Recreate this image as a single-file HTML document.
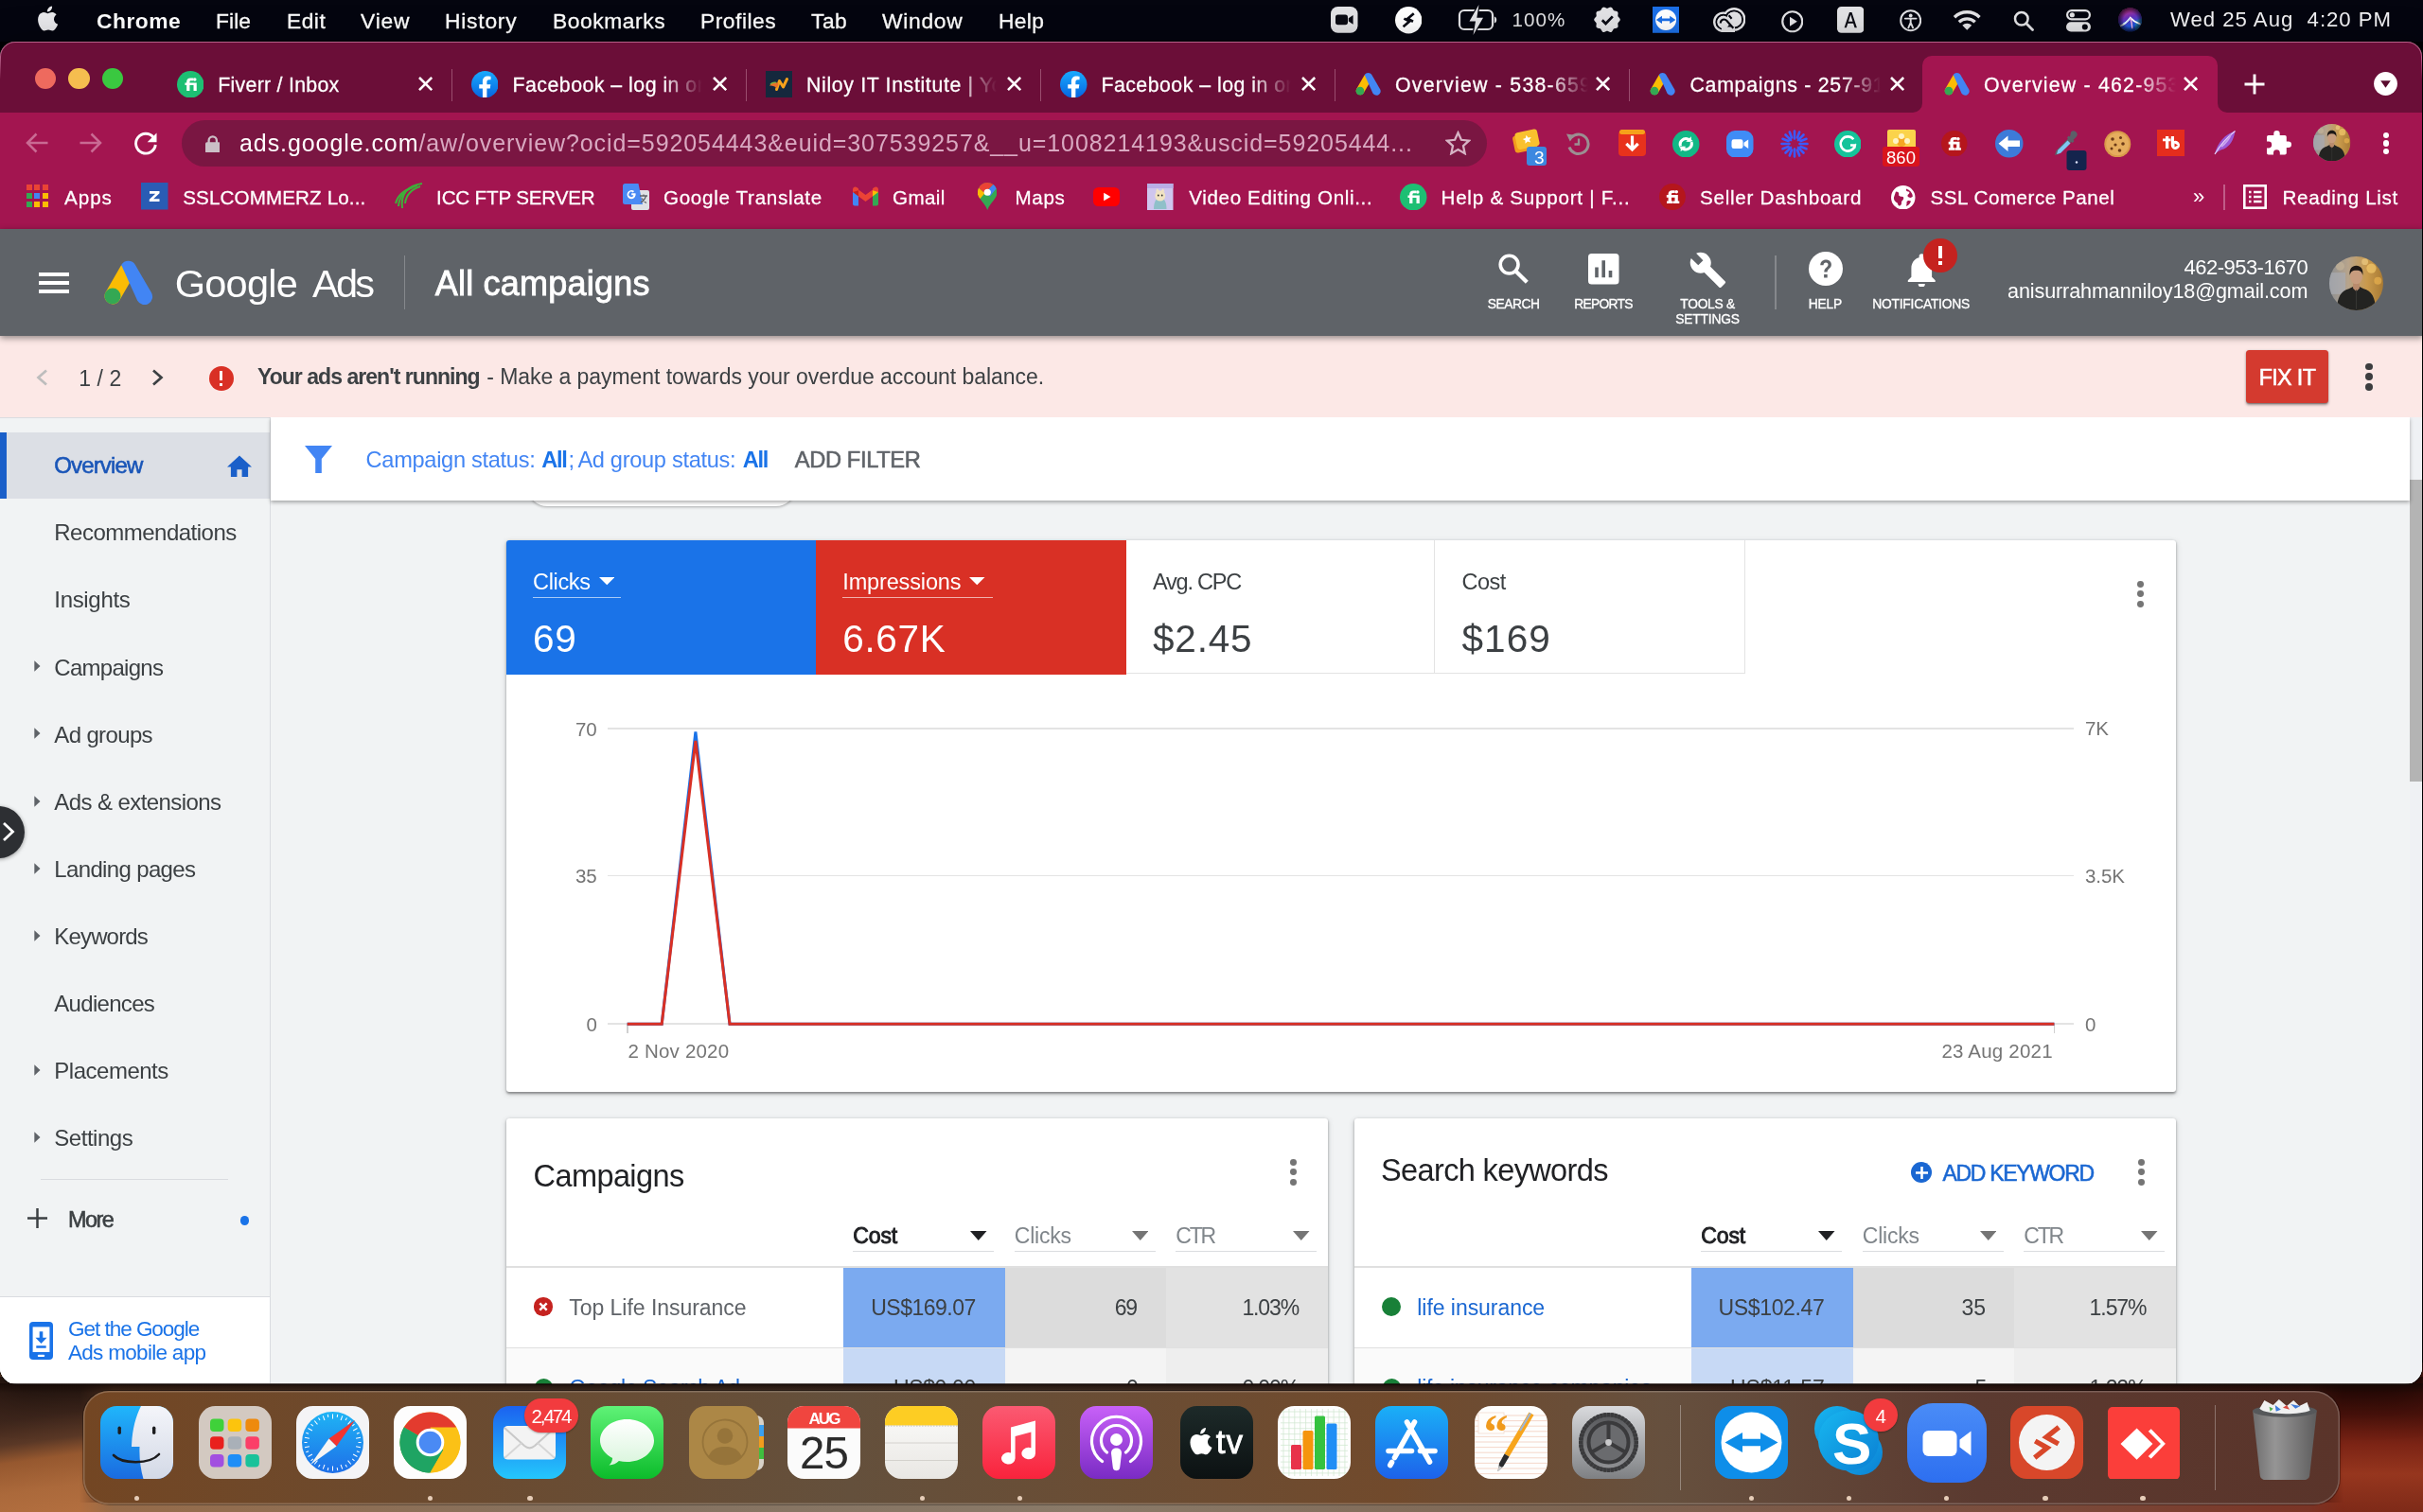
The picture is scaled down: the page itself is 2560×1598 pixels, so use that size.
<!DOCTYPE html>
<html lang="en"><head><meta charset="utf-8"><title>Overview - Google Ads</title>
<style>
html,body{margin:0;padding:0;}
body{width:2560px;height:1598px;overflow:hidden;position:relative;background:#000;font-family:"Liberation Sans", sans-serif;}
#root{position:absolute;left:0;top:0;width:2560px;height:1598px;overflow:hidden;will-change:transform;}
#root div,#root span.t,#root svg{position:absolute;}
span.t{white-space:nowrap;line-height:1;}

.sh1{box-shadow:0 1px 3px rgba(60,64,67,.3),0 2px 6px rgba(60,64,67,.15);}

</style></head><body><div id="root">
<div style="left:0;top:1440px;width:2560px;height:158px;background:linear-gradient(90deg,#5a3622 0%,#5a4030 20%,#5d4436 50%,#4a2a22 80%,#4a160f 100%);"></div>
<div style="left:0;top:1588px;width:2560px;height:10px;background:linear-gradient(90deg,#9a6a44,#857260 25%,#8a7a68 45%,#7d6552 65%,#7a4a3a 85%,#7a2a1c);"></div>
<div style="left:0;top:1455px;width:120px;height:143px;-webkit-mask-image:linear-gradient(90deg,#000 70%,transparent);background:linear-gradient(172deg,#2a1812 0%,#3e261c 30%,#5a3826 46%,#96582f 58%,#ab693b 78%,#b47040 100%);"></div>
<div style="left:2440px;top:1455px;width:120px;height:143px;-webkit-mask-image:linear-gradient(270deg,#000 70%,transparent);background:linear-gradient(180deg,#260906 0%,#4a120b 28%,#7c2415 50%,#96361e 72%,#7e2a18 100%);"></div>
<div style="left:0px;top:0px;width:2560px;height:46px;background:#04050f;"></div>
<svg style="left:39px;top:5px;" width="23.5" height="28.6" viewBox="0 0 23 28"><path fill="#e9e9ec" d="M17.6 14.9c0-3 2.5-4.5 2.6-4.6-1.4-2.1-3.6-2.4-4.4-2.4-1.9-.2-3.7 1.1-4.6 1.1-1 0-2.4-1.1-4-1.100C5.1 8 3.2 9.1 2.1 11c-2.2 3.9-.6 9.6 1.6 12.7 1.1 1.5 2.3 3.3 4 3.2 1.6-.1 2.2-1 4.1-1s2.5 1 4.2 1c1.7 0 2.8-1.6 3.9-3.1 1.2-1.8 1.7-3.5 1.7-3.6-.1 0-3.9-1.5-4-5.300zM14.4 5.600c.9-1.1 1.5-2.6 1.3-4.1-1.3.1-2.8.9-3.7 1.9-.8.9-1.5 2.5-1.3 3.9 1.4.1 2.8-.7 3.7-1.700z"/></svg>
<span class="t" style="left:102px;top:10.9px;font-size:22.8px;color:#fff;font-weight:700;letter-spacing:0.52px;">Chrome</span>
<span class="t" style="left:228px;top:10.9px;font-size:22.8px;color:#fff;letter-spacing:0.08px;-webkit-text-stroke:0.3px;">File</span>
<span class="t" style="left:303px;top:10.9px;font-size:22.8px;color:#fff;letter-spacing:0.49px;-webkit-text-stroke:0.3px;">Edit</span>
<span class="t" style="left:381px;top:10.9px;font-size:22.8px;color:#fff;letter-spacing:0.86px;-webkit-text-stroke:0.3px;">View</span>
<span class="t" style="left:470px;top:10.9px;font-size:22.8px;color:#fff;letter-spacing:0.78px;-webkit-text-stroke:0.3px;">History</span>
<span class="t" style="left:584px;top:10.9px;font-size:22.8px;color:#fff;letter-spacing:0.58px;-webkit-text-stroke:0.3px;">Bookmarks</span>
<span class="t" style="left:740px;top:10.9px;font-size:22.8px;color:#fff;letter-spacing:0.53px;-webkit-text-stroke:0.3px;">Profiles</span>
<span class="t" style="left:857px;top:10.9px;font-size:22.8px;color:#fff;letter-spacing:0.49px;-webkit-text-stroke:0.3px;">Tab</span>
<span class="t" style="left:932px;top:10.9px;font-size:22.8px;color:#fff;letter-spacing:0.71px;-webkit-text-stroke:0.3px;">Window</span>
<span class="t" style="left:1055px;top:10.9px;font-size:22.8px;color:#fff;letter-spacing:0.32px;-webkit-text-stroke:0.3px;">Help</span>
<svg style="left:1406px;top:7.4px;" width="28.5" height="27.8" viewBox="0 0 28.5 27.8"><rect width="28.5" height="27.8" rx="7.5" fill="#e2e2e5"/><rect x="5" y="8.6" width="13" height="10.6" rx="2.6" fill="#0a0b14"/><path d="M18.8 12.2 23.6 9v9.800l-4.8-3.200z" fill="#0a0b14"/></svg>
<svg style="left:1473.6px;top:7.2px;" width="28.4" height="28.4" viewBox="0 0 28.4 28.4"><circle cx="14.2" cy="14.2" r="14.2" fill="#fff"/><path d="M19.8 7.2 13.2 12.8 19 15.8M8.6 21.2 15.2 15.6 9.4 12.6" fill="none" stroke="#0a0b14" stroke-width="2.7" stroke-linejoin="miter"/></svg>
<svg style="left:1540px;top:5px;" width="42" height="32" viewBox="0 0 42 32"><rect x="2" y="6" width="35" height="20" rx="5" fill="none" stroke="#e2e2e5" stroke-width="2.2"/><path d="M38.8 12.500v7c1.6-.4 2.4-1.8 2.4-3.500s-.8-3.1-2.4-3.500z" fill="#e2e2e5"/><path d="M22.5 0 12.5 17.500h6.500L16.5 32 27 13.800h-6.700z" fill="#e2e2e5" stroke="#04050f" stroke-width="2.4" paint-order="stroke"/></svg>
<span class="t" style="left:1597.4px;top:10.5px;font-size:20.6px;color:#e2e2e5;letter-spacing:1.12px;">100%</span>
<svg style="left:1684px;top:7.4px;" width="28" height="27.6" viewBox="0 0 28 27.6"><path d="M27.80 13.80L27.72 14.34L27.49 14.86L27.15 15.36L26.74 15.82L26.31 16.25L25.92 16.66L25.62 17.08L25.41 17.51L25.32 17.98L25.33 18.49L25.40 19.06L25.49 19.66L25.56 20.27L25.54 20.87L25.42 21.43L25.16 21.91L24.78 22.30L24.29 22.59L23.73 22.79L23.12 22.92L22.52 23.02L21.96 23.13L21.47 23.28L21.05 23.51L20.70 23.83L20.41 24.26L20.13 24.75L19.86 25.29L19.54 25.83L19.18 26.31L18.75 26.68L18.26 26.92L17.73 27.02L17.16 26.96L16.58 26.79L16.02 26.54L15.48 26.27L14.96 26.03L14.47 25.86L14.00 25.80L13.53 25.86L13.04 26.03L12.52 26.27L11.98 26.54L11.42 26.79L10.84 26.96L10.27 27.02L9.74 26.92L9.25 26.68L8.82 26.31L8.46 25.83L8.14 25.29L7.87 24.75L7.59 24.26L7.30 23.83L6.95 23.51L6.53 23.28L6.04 23.13L5.48 23.02L4.88 22.92L4.27 22.79L3.71 22.59L3.22 22.30L2.84 21.91L2.58 21.43L2.46 20.87L2.44 20.27L2.51 19.66L2.60 19.06L2.67 18.49L2.68 17.98L2.59 17.51L2.38 17.08L2.08 16.66L1.69 16.25L1.26 15.82L0.85 15.36L0.51 14.86L0.28 14.34L0.20 13.80L0.28 13.26L0.51 12.74L0.85 12.24L1.26 11.78L1.69 11.35L2.08 10.94L2.38 10.52L2.59 10.09L2.68 9.62L2.67 9.11L2.60 8.54L2.51 7.94L2.44 7.33L2.46 6.73L2.58 6.17L2.84 5.69L3.22 5.30L3.71 5.01L4.27 4.81L4.88 4.68L5.48 4.58L6.04 4.47L6.53 4.32L6.95 4.09L7.30 3.77L7.59 3.34L7.87 2.85L8.14 2.31L8.46 1.77L8.82 1.29L9.25 0.92L9.74 0.68L10.27 0.58L10.84 0.64L11.42 0.81L11.98 1.06L12.52 1.33L13.04 1.57L13.53 1.74L14.00 1.80L14.47 1.74L14.96 1.57L15.48 1.33L16.02 1.06L16.58 0.81L17.16 0.64L17.73 0.58L18.26 0.68L18.75 0.92L19.18 1.29L19.54 1.77L19.86 2.31L20.13 2.85L20.41 3.34L20.70 3.77L21.05 4.09L21.47 4.32L21.96 4.47L22.52 4.58L23.12 4.68L23.73 4.81L24.29 5.01L24.78 5.30L25.16 5.69L25.42 6.17L25.54 6.73L25.56 7.33L25.49 7.94L25.40 8.54L25.33 9.11L25.32 9.62L25.41 10.09L25.62 10.52L25.92 10.94L26.31 11.35L26.74 11.78L27.15 12.24L27.49 12.74L27.72 13.26L27.80 13.80Z" fill="#e2e2e5"/><path d="M8.8 14.200 12.500 17.900 19.800 10.400" fill="none" stroke="#0a0b14" stroke-width="2.800"/></svg>
<svg style="left:1746px;top:7.4px;" width="28.2" height="27.8" viewBox="0 0 28.2 27.8"><rect width="28.2" height="27.8" fill="#1c6fe6"/><circle cx="14.1" cy="13.9" r="11" fill="#fff"/><path d="M3.8 13.9 10 9.800v2.700h8.200V9.800l6.2 4.1-6.2 4.100v-2.700H10v2.700z" fill="#1c6fe6"/></svg>
<svg style="left:1809.8px;top:7.9px;" width="34.5" height="26.2" viewBox="0 0 34.5 26.2"><circle cx="10.900" cy="15.300" r="10.900" fill="#e2e2e5"/><circle cx="22.100" cy="12.400" r="12.400" fill="#e2e2e5"/><rect x="10" y="18" width="13" height="8.200" fill="#e2e2e5"/><g fill="none" stroke="#04050f" stroke-width="2"><circle cx="10.900" cy="15.300" r="7.500"/><circle cx="22.100" cy="12.400" r="9"/></g><circle cx="10.900" cy="15.300" r="6.500" fill="#e2e2e5"/><circle cx="22.100" cy="12.400" r="8" fill="#e2e2e5"/><rect x="9" y="20.500" width="14" height="3.600" fill="#e2e2e5"/><path d="M7.800 16.500C7.800 12.500 12 11.500 14.300 13.800L21.300 21.800M16.600 8.300 19.600 11.700" fill="none" stroke="#04050f" stroke-width="2.100"/></svg>
<svg style="left:1881.5px;top:11px;" width="23.5" height="23.5" viewBox="0 0 23.5 23.5"><circle cx="11.75" cy="11.75" r="10.5" fill="none" stroke="#e2e2e5" stroke-width="2.2"/><path d="M9 6.800v9.900l7.8-4.950z" fill="#e2e2e5"/></svg>
<svg style="left:1941px;top:7.4px;" width="28.4" height="27.8" viewBox="0 0 28.4 27.8"><rect width="28.4" height="27.8" rx="4.5" fill="#e2e2e5"/><path d="M7.6 22.3 13 6h2.500l5.4 16.300h-2.400l-1.4-4.500h-5.800l-1.4 4.500zM12 15.800h4.500l-2.250-7.200z" fill="#0a0b14"/></svg>
<svg style="left:2006.5px;top:10.3px;" width="23.4" height="23.4" viewBox="0 0 23.4 23.4"><circle cx="11.7" cy="11.7" r="10.5" fill="none" stroke="#e2e2e5" stroke-width="2"/><circle cx="11.7" cy="6.5" r="1.9" fill="#e2e2e5"/><path d="M5.8 9.600h11.800M11.7 9.600v5M11.7 14 9.3 19.500M11.7 14l2.4 5.5" stroke="#e2e2e5" stroke-width="1.9" fill="none" stroke-linecap="round"/></svg>
<svg style="left:2063px;top:9.5px;" width="30.5" height="22" viewBox="0 0 30.5 22"><g fill="none" stroke="#e2e2e5" stroke-width="3.4"><path d="M2 8.200a19 19 0 0 1 26.5 0"/><path d="M6.8 13.200a12.3 12.3 0 0 1 16.9 0"/></g><path d="M15.250 21.8 10.3 16.800a7 7 0 0 1 9.9 0z" fill="#e2e2e5"/></svg>
<svg style="left:2127px;top:11px;" width="22" height="22" viewBox="0 0 22 22"><circle cx="8.8" cy="8.8" r="6.8" fill="none" stroke="#e2e2e5" stroke-width="2.5"/><path d="M13.8 13.8 20.5 20.5" stroke="#e2e2e5" stroke-width="2.8" stroke-linecap="round"/></svg>
<svg style="left:2182.5px;top:10.3px;" width="26" height="23.5" viewBox="0 0 26 23.5"><rect x="1.1" y="1.1" width="23.8" height="9.3" rx="4.650" fill="none" stroke="#e2e2e5" stroke-width="2.2"/><circle cx="6.3" cy="5.750" r="2.6" fill="#e2e2e5"/><rect x="0" y="13.3" width="26" height="10.2" rx="5.1" fill="#e2e2e5"/><circle cx="19.8" cy="18.4" r="3" fill="#04050f"/></svg>
<svg style="left:2237.5px;top:8.4px;" width="25.2" height="25.7" viewBox="0 0 25.2 25.7"><defs><clipPath id="sic"><circle cx="12.600" cy="12.850" r="12.500"/></clipPath><linearGradient id="sig" x1=".3" y1="0" x2=".6" y2="1"><stop offset="0" stop-color="#d2347e"/><stop offset=".4" stop-color="#6a2fb8"/><stop offset=".75" stop-color="#1f55d8"/><stop offset="1" stop-color="#173a9a"/></linearGradient><radialGradient id="sir" cx=".5" cy=".5" r=".5"><stop offset=".55" stop-color="#000" stop-opacity="0"/><stop offset="1" stop-color="#05061a" stop-opacity=".75"/></radialGradient></defs><g clip-path="url(#sic)"><rect width="26" height="26" fill="url(#sig)"/><path d="M18 14l8-3v14h-8z" fill="#1e8f9a" opacity=".55"/><path d="M2.500 19.500C7 17.500 10 14.500 12.800 10.800 15.500 13.800 18.500 15.800 23 17.300" stroke="#fff" stroke-width="1.900" fill="none" stroke-linecap="round"/><path d="M12.800 10.800c1.200 3.500 1.800 7 2 11.500" stroke="#f7b6e0" stroke-width="1.300" fill="none"/><path d="M5 17c3-1 5.500-3 7.800-6.200" stroke="#bfe9ff" stroke-width="1" fill="none"/><rect width="26" height="26" fill="url(#sir)"/></g></svg>
<span class="t" style="left:2293px;top:9.7px;font-size:22.2px;color:#f2f2f4;letter-spacing:0.98px;">Wed 25 Aug&nbsp; 4:20 PM</span>
<div style="left:0px;top:44px;width:2560px;height:26px;background:#010104;"></div>
<div id="win" style="left:0;top:44px;width:2558.5px;height:1418.5px;border-radius:16px 16px 18px 18px;background:#f1f3f4;overflow:hidden;box-shadow:0 0 0 1px rgba(0,0,0,.55),0 10px 40px rgba(0,0,0,.5);">
<div style="left:0;top:-44px;width:2560px;height:1598px;">
<div style="left:0px;top:44px;width:2560px;height:75px;background:#6b0e38;"></div>
<div style="left:0px;top:118.5px;width:2560px;height:123.0px;background:#a31550;"></div>
<div style="left:2031px;top:58.5px;width:312px;height:61px;background:#a31550;border-radius:10px 10px 0 0;"></div>
<svg style="left:2021px;top:109px;" width="10" height="10" viewBox="0 0 10 10"><path d="M10 0V10H0A10 10 0 0 0 10 0Z" fill="#a31550"/></svg>
<svg style="left:2343px;top:109px;" width="10" height="10" viewBox="0 0 10 10"><path d="M0 0V10H10A10 10 0 0 1 0 0Z" fill="#a31550"/></svg>
<div style="left:36.6px;top:71.8px;width:22.4px;height:22.4px;border-radius:50%;background:#ee6a5e;"></div>
<div style="left:72.3px;top:71.8px;width:22.4px;height:22.4px;border-radius:50%;background:#f5bd4f;"></div>
<div style="left:107.8px;top:71.8px;width:22.4px;height:22.4px;border-radius:50%;background:#3ac840;"></div>
<svg style="left:186.5px;top:74.5px;" width="28.5" height="28.5" viewBox="0 0 28 28"><circle cx="14" cy="14" r="14" fill="#1dbf73"/><path d="M8.3 12.200h1.700v-1.100c0-2.3 1.5-3.7 3.9-3.700h3.200v2.700h-2.500c-.9 0-1.4.4-1.4 1.200v.9h7.200v8.500h-3.200v-5.900h-4v5.900H10v-5.900H8.300z" fill="#fff"/><circle cx="18.5" cy="8.8" r="1.7" fill="#fff"/></svg>
<span class="t" style="left:230.3px;top:79.65px;font-size:21.3px;color:#fff;letter-spacing:0.28px;-webkit-text-stroke:0.28px;">Fiverr / Inbox</span>
<svg style="left:442.1px;top:81.4px;" width="15.2" height="15.2" viewBox="0 0 15.2 15.2"><path d="M1 1 14.2 14.2M14.2 1 1 14.2" stroke="#fff" stroke-width="2.6" fill="none"/></svg>
<div style="left:476.7px;top:73px;width:1.6px;height:34px;background:#9a4d6e;"></div>
<svg style="left:497.8px;top:74.5px;" width="28.5" height="28.5" viewBox="0 0 28 28"><defs><linearGradient id="fbg" x1="0" y1="0" x2="0" y2="1"><stop offset="0" stop-color="#19aafe"/><stop offset="1" stop-color="#0664e0"/></linearGradient></defs><circle cx="14" cy="14" r="14" fill="url(#fbg)"/><path d="M19.4 18.1 20 14h-3.900v-2.600c0-1.1.5-2.2 2.3-2.200h1.800V5.700s-1.6-.3-3.2-.3c-3.2 0-5.3 2-5.3 5.500V14H8.100v4.100h3.600V28h4.400v-9.900z" fill="#fff"/></svg>
<span class="t" style="left:541.5px;top:79.65px;font-size:21.3px;color:#fff;letter-spacing:0.49px;-webkit-text-stroke:0.28px;">Facebook – log in or</span>
<div style="left:700px;top:72px;width:51px;height:36px;background:linear-gradient(90deg,#6b0e3800,#6b0e38 82%);"></div>
<svg style="left:753.1px;top:81.4px;" width="15.2" height="15.2" viewBox="0 0 15.2 15.2"><path d="M1 1 14.2 14.2M14.2 1 1 14.2" stroke="#fff" stroke-width="2.6" fill="none"/></svg>
<div style="left:787.7px;top:73px;width:1.6px;height:34px;background:#9a4d6e;"></div>
<svg style="left:809px;top:75px;" width="28" height="28" viewBox="0 0 28 28"><rect width="28" height="28" fill="#15283d"/><path d="M11.5 19.5 14.5 10.5 18.5 17 22.5 8.500" stroke="#f7a21b" stroke-width="3" fill="none" stroke-linejoin="round" stroke-linecap="round"/><path d="M4 15.5c2.5-3.5 6-4.5 9.5-2l-1.500 4.500c-2.500-2-5-2.800-8-2.500z" fill="#e8722a"/><path d="M5 14c2-1.800 4-2.300 6-1.600" stroke="#7cb342" stroke-width="1.400" fill="none"/></svg>
<span class="t" style="left:852px;top:79.65px;font-size:21.3px;color:#fff;letter-spacing:0.65px;-webkit-text-stroke:0.28px;">Niloy IT Institute | Yo</span>
<div style="left:1012px;top:72px;width:50px;height:36px;background:linear-gradient(90deg,#6b0e3800,#6b0e38 82%);"></div>
<svg style="left:1063.6px;top:81.4px;" width="15.2" height="15.2" viewBox="0 0 15.2 15.2"><path d="M1 1 14.2 14.2M14.2 1 1 14.2" stroke="#fff" stroke-width="2.6" fill="none"/></svg>
<div style="left:1098.7px;top:73px;width:1.6px;height:34px;background:#9a4d6e;"></div>
<svg style="left:1120px;top:74.5px;" width="28.5" height="28.5" viewBox="0 0 28 28"><defs><linearGradient id="fbg" x1="0" y1="0" x2="0" y2="1"><stop offset="0" stop-color="#19aafe"/><stop offset="1" stop-color="#0664e0"/></linearGradient></defs><circle cx="14" cy="14" r="14" fill="url(#fbg)"/><path d="M19.4 18.1 20 14h-3.900v-2.600c0-1.1.5-2.2 2.3-2.200h1.800V5.700s-1.6-.3-3.2-.3c-3.2 0-5.3 2-5.3 5.500V14H8.100v4.100h3.600V28h4.400v-9.900z" fill="#fff"/></svg>
<span class="t" style="left:1163.4px;top:79.65px;font-size:21.3px;color:#fff;letter-spacing:0.49px;-webkit-text-stroke:0.28px;">Facebook – log in or</span>
<div style="left:1322px;top:72px;width:51px;height:36px;background:linear-gradient(90deg,#6b0e3800,#6b0e38 82%);"></div>
<svg style="left:1375.4px;top:81.4px;" width="15.2" height="15.2" viewBox="0 0 15.2 15.2"><path d="M1 1 14.2 14.2M14.2 1 1 14.2" stroke="#fff" stroke-width="2.6" fill="none"/></svg>
<div style="left:1409.7px;top:73px;width:1.6px;height:34px;background:#9a4d6e;"></div>
<svg style="left:1432px;top:76px;" width="27" height="25" viewBox="0 0 26.5 24.5"><path d="M9.5 3.2 1.2 17.600a4.3 4.3 0 0 0 7.4 4.300L16.9 7.500z" fill="#fbbc04"/><path d="M9.6 3.100a4.3 4.3 0 0 1 7.4-.1l8.6 14.800a4.3 4.3 0 0 1-7.5 4.300z" fill="#4285f4"/><circle cx="4.9" cy="19.8" r="4.3" fill="#34a853"/></svg>
<span class="t" style="left:1474px;top:79.65px;font-size:21.3px;color:#fff;letter-spacing:1.24px;-webkit-text-stroke:0.28px;">Overview - 538-659</span>
<div style="left:1636px;top:72px;width:51px;height:36px;background:linear-gradient(90deg,#6b0e3800,#6b0e38 82%);"></div>
<svg style="left:1686.4px;top:81.4px;" width="15.2" height="15.2" viewBox="0 0 15.2 15.2"><path d="M1 1 14.2 14.2M14.2 1 1 14.2" stroke="#fff" stroke-width="2.6" fill="none"/></svg>
<div style="left:1720.8px;top:73px;width:1.6px;height:34px;background:#9a4d6e;"></div>
<svg style="left:1743px;top:76px;" width="27" height="25" viewBox="0 0 26.5 24.5"><path d="M9.5 3.2 1.2 17.600a4.3 4.3 0 0 0 7.4 4.300L16.9 7.500z" fill="#fbbc04"/><path d="M9.6 3.100a4.3 4.3 0 0 1 7.4-.1l8.6 14.800a4.3 4.3 0 0 1-7.5 4.300z" fill="#4285f4"/><circle cx="4.9" cy="19.8" r="4.3" fill="#34a853"/></svg>
<span class="t" style="left:1785.5px;top:79.65px;font-size:21.3px;color:#fff;letter-spacing:0.72px;-webkit-text-stroke:0.28px;">Campaigns - 257-91</span>
<div style="left:1946px;top:72px;width:50px;height:36px;background:linear-gradient(90deg,#6b0e3800,#6b0e38 82%);"></div>
<svg style="left:1997.4px;top:81.4px;" width="15.2" height="15.2" viewBox="0 0 15.2 15.2"><path d="M1 1 14.2 14.2M14.2 1 1 14.2" stroke="#fff" stroke-width="2.6" fill="none"/></svg>
<svg style="left:2054px;top:76px;" width="27" height="25" viewBox="0 0 26.5 24.5"><path d="M9.5 3.2 1.2 17.600a4.3 4.3 0 0 0 7.4 4.300L16.9 7.500z" fill="#fbbc04"/><path d="M9.6 3.100a4.3 4.3 0 0 1 7.4-.1l8.6 14.800a4.3 4.3 0 0 1-7.5 4.300z" fill="#4285f4"/><circle cx="4.9" cy="19.8" r="4.3" fill="#34a853"/></svg>
<span class="t" style="left:2096px;top:79.65px;font-size:21.3px;color:#fff;letter-spacing:1.21px;-webkit-text-stroke:0.28px;">Overview - 462-953</span>
<div style="left:2258px;top:72px;width:50px;height:36px;background:linear-gradient(90deg,#a3155000,#a31550 82%);"></div>
<svg style="left:2307.1px;top:81.4px;" width="15.2" height="15.2" viewBox="0 0 15.2 15.2"><path d="M1 1 14.2 14.2M14.2 1 1 14.2" stroke="#fff" stroke-width="2.6" fill="none"/></svg>
<svg style="left:2371px;top:78px;" width="22" height="22" viewBox="0 0 22 22"><path d="M11 .5v21M.5 11h21" stroke="#fff" stroke-width="2.9" fill="none"/></svg>
<svg style="left:2508px;top:76.2px;" width="25" height="25" viewBox="0 0 25 25"><circle cx="12.5" cy="12.5" r="12.4" fill="#fff"/><path d="M7.2 9.300h10.600l-5.3 7.400z" fill="#5a0c2f"/></svg>
<svg style="left:27px;top:140px;" width="24" height="22" viewBox="0 0 24 22"><path d="M23.5 11H2.500M11.5 1.5 2 11l9.5 9.5" stroke="#c96a93" stroke-width="2.5" fill="none"/></svg>
<svg style="left:84px;top:140px;" width="24" height="22" viewBox="0 0 24 22"><path d="M.5 11h21M12.5 1.5 22 11l-9.5 9.5" stroke="#c96a93" stroke-width="2.5" fill="none"/></svg>
<svg style="left:141px;top:138.5px;" width="26" height="26" viewBox="0 0 26 26"><path d="M21.2 6.300A10.4 10.4 0 1 0 23.3 14" stroke="#fff" stroke-width="2.9" fill="none"/><path d="M24.5 1.500v9.800h-9.800z" fill="#fff"/></svg>
<div style="left:192px;top:127px;width:1379px;height:48.5px;border-radius:24.5px;background:#7a1642;"></div>
<svg style="left:216.5px;top:142.5px;" width="15.5" height="18.5" viewBox="0 0 15.5 18.5"><rect x="0" y="7.3" width="15.5" height="11.2" rx="1.6" fill="#cbbfc6"/><path d="M3.6 8V5.500a4.150 4.150 0 0 1 8.3 0V8" stroke="#cbbfc6" stroke-width="2.3" fill="none"/></svg>
<span class="t" style="left:253px;top:138.8px;font-size:25px;color:#fff;letter-spacing:0.92px;">ads.google.com<span style="color:#d9a9c1">/aw/overview?ocid=592054443&amp;euid=307539257&amp;__u=1008214193&amp;uscid=59205444...</span></span>
<svg style="left:1526.5px;top:138px;" width="27" height="26" viewBox="0 0 27 26"><path d="M13.5 2.3 16.9 9.8 25 10.7 19 16.2 20.7 24.2 13.5 20.1 6.3 24.2 8 16.2 2 10.7 10.1 9.800z" stroke="#d6b3c4" stroke-width="2.3" fill="none" stroke-linejoin="miter"/></svg>
<svg style="left:1596px;top:136px;" width="40" height="46" viewBox="0 0 40 46"><g transform="rotate(-12 14 14)"><rect x="3" y="6" width="24" height="18" rx="3" fill="#f29d1d"/><rect x="6" y="3" width="24" height="18" rx="3" fill="#f9c12e"/><path d="M18 7.500l1.4 3 3.2.3-2.4 2.1.7 3.1-2.9-1.7-2.9 1.7.7-3.1-2.4-2.1 3.2-.3z" fill="#fff"/></g><rect x="17" y="19" width="21" height="20" rx="3" fill="#3c88e0"/></svg>
<span class="t" style="left:1621px;top:157.3px;font-size:19px;color:#fff;">3</span>
<svg style="left:1654px;top:138px;" width="27" height="27" viewBox="0 0 27 27"><path d="M6.2 7.200A10.3 10.3 0 1 1 4 17.5" stroke="#9b8f92" stroke-width="3" fill="none"/><path d="M1 3.5 9.8 4.8 4.8 11.500z" fill="#9b8f92"/><path d="M14 8.500v6h-4.5" stroke="#9b8f92" stroke-width="2.3" fill="none"/></svg>
<svg style="left:1710px;top:137px;" width="29" height="29" viewBox="0 0 29 29"><rect y="1" width="29" height="27" rx="4" fill="#e8321c"/><rect x="1" y="0" width="27" height="5" rx="2.5" fill="#f6a11a"/><path d="M14.5 6.500v14M8.3 14.800l6.2 6.2 6.2-6.2" stroke="#fff" stroke-width="3.2" fill="none"/></svg>
<svg style="left:1767px;top:137.5px;" width="28.5" height="28.5" viewBox="0 0 28.5 28.5"><circle cx="14.250" cy="14.250" r="14.250" fill="#12b886"/><path d="M8.5 16.500a6 6 0 0 1 9.5-6.500l-2 .3M20 12a6 6 0 0 1-9.5 6.500l2-.3" stroke="#fff" stroke-width="3" fill="none"/><path d="M19.8 6.200v5.600h-5.600zM8.7 22.300v-5.600h5.600z" fill="#fff"/></svg>
<svg style="left:1824px;top:137.5px;" width="28.5" height="28.5" viewBox="0 0 28.5 28.5"><rect width="28.5" height="28.5" rx="9" fill="#3f8cf6"/><rect x="5.5" y="9.3" width="12" height="9.8" rx="2.4" fill="#fff"/><path d="M18.5 12.7 23.2 9.500v9.500l-4.7-3.200z" fill="#fff"/></svg>
<svg style="left:1880.5px;top:137px;" width="30" height="30" viewBox="0 0 30 30"><g stroke="#3b5bfd" stroke-width="2.6" stroke-linecap="round"><path d="M15 1.500v8M15 20.500v8M1.5 15h8M20.5 15h8M5.5 5.500l5.6 5.600M18.9 18.900l5.6 5.600M24.5 5.500l-5.6 5.600M11.1 18.900l-5.6 5.600M9.8 2.500l2.2 6M18 21.500l2.2 6M20.2 2.5 18 8.500M12 21.500l-2.2 6M2.5 9.800l6 2.200M21.5 18l6 2.200M2.5 20.200l6-2.200M21.5 12l6-2.2"/></g></svg>
<svg style="left:1937.5px;top:137.5px;" width="28.5" height="28.5" viewBox="0 0 28.5 28.5"><circle cx="14.250" cy="14.250" r="14.250" fill="#15c39a"/><path d="M20.3 9.200a7.6 7.6 0 1 0 1.5 6.300H17" stroke="#fff" stroke-width="2.6" fill="none"/><path d="M22.5 13.200v5.600h-3z" fill="#fff"/></svg>
<svg style="left:1994px;top:137px;" width="30" height="20" viewBox="0 0 30 20"><rect width="30" height="20" rx="2" fill="#fbd34b"/><circle cx="15" cy="13" r="5" fill="#f5a623"/><circle cx="9" cy="12" r="3" fill="#fff3c4"/><circle cx="21" cy="12" r="3" fill="#fff3c4"/><circle cx="15" cy="7" r="3" fill="#fff3c4"/></svg>
<div style="left:1989px;top:155px;width:39px;height:20.5px;background:#d9141c;border-radius:3px;"></div>
<span class="t" style="left:1993px;top:157.55px;font-size:18.5px;color:#fff;letter-spacing:0.05px;">860</span>
<svg style="left:2051px;top:137.8px;" width="27.5" height="27.5" viewBox="0 0 28 28"><circle cx="14" cy="14" r="14" fill="#b5161c"/><path d="M7.8 12h1.800v-1c0-2.4 1.6-3.8 4-3.800h3v2.800h-2.200c-.9 0-1.4.4-1.4 1.200v.8h6.800v6.500h1.500v2.500h-6.500V18.500h1.700V14.700H13v3.800h1.500V21H8v-2.500h1.600v-3.800H7.800z" fill="#fff"/><circle cx="18.2" cy="8.8" r="1.8" fill="#fff"/></svg>
<svg style="left:2108px;top:137px;" width="29.5" height="29.5" viewBox="0 0 29.5 29.5"><circle cx="14.750" cy="14.750" r="14.750" fill="#3d7bd9"/><path d="M3.5 14.750 13.5 6.500v5H26v6.500H13.500v5z" fill="#fff"/></svg>
<svg style="left:2166px;top:136px;" width="40" height="46" viewBox="0 0 40 46"><path d="M22 3.500a3.8 3.8 0 0 1 5.4 5.400l-3 3 1.2 1.2-2 2-1.2-1.200L9.5 26.8 5 28l1.2-4.500L19 10.600l-1.2-1.2 2-2 1.2 1.200z" fill="#5b6068"/><path d="M18.5 12.5 8.2 22.8 7 27l4.2-1.2 10.3-10.300z" fill="#7ec8f2"/><rect x="17.5" y="23" width="21" height="21" rx="3" fill="#14244d"/><circle cx="28" cy="35.5" r="1.2" fill="#dfe6ff"/></svg>
<svg style="left:2223px;top:137.5px;" width="28.5" height="28.5" viewBox="0 0 28.5 28.5"><circle cx="14.250" cy="14.250" r="14" fill="#d99a4a"/><circle cx="14.250" cy="14.250" r="12" fill="#e6ad5e"/><g fill="#6b3a17"><circle cx="9" cy="9" r="1.8"/><circle cx="17.5" cy="7.5" r="1.5"/><circle cx="20" cy="14" r="1.8"/><circle cx="12" cy="15" r="1.6"/><circle cx="8" cy="19" r="1.5"/><circle cx="16.5" cy="21" r="1.8"/></g></svg>
<svg style="left:2279px;top:137px;" width="29" height="28" viewBox="0 0 29 28"><rect width="29" height="28" fill="#e52d1d"/><path d="M6 9.500h3V7h3.300v2.500h2.200v2.800h-2.200V20H9v-7.700H6z" fill="#fff"/><path d="M14.8 7h3.200v5a4.6 4.6 0 1 1-3.2 4.400z" fill="#fff"/><path d="M18.5 14.6 22 16.5 18.5 18.400z" fill="#e52d1d"/></svg>
<svg style="left:2338px;top:137px;" width="26" height="28" viewBox="0 0 26 28"><path d="M23.5 1.500C13 5 5 13 2 26c3-3 6-4.5 9.5-5.500C18 17.5 22 11 23.5 1.500z" fill="#9b59d6"/><path d="M23.5 1.500C15 8 8 16 2 26" stroke="#e6d2f7" stroke-width="1.2" fill="none"/><path d="M19 5c-1.5 4-5 9-10 13" stroke="#c9a4ef" stroke-width="2" fill="none"/></svg>
<svg style="left:2394.5px;top:138px;" width="26" height="25.5" viewBox="0 0 26 25.5"><path d="M10.5 0a3.2 3.2 0 0 1 3.2 3.200V5H19a1.8 1.8 0 0 1 1.8 1.800v4.700h1.900a3.3 3.3 0 0 1 0 6.600h-1.900v5.600A1.8 1.8 0 0 1 19 25.500h-5.200v-1.900a3.4 3.4 0 0 0-6.8 0v1.900H1.800A1.8 1.8 0 0 1 0 23.700v-5.300h1.800a3.4 3.4 0 0 0 0-6.800H0V6.800A1.8 1.8 0 0 1 1.8 5h5.500V3.200A3.2 3.2 0 0 1 10.5 0z" fill="#fff"/></svg>
<svg style="left:2444.3px;top:131.1px;" width="39.4" height="39.4" viewBox="0 0 100 100"><defs><clipPath id="avc1"><circle cx="50" cy="50" r="50"/></clipPath><linearGradient id="avg1" x1="0" y1="0" x2="1" y2="0"><stop offset="0" stop-color="#8d8f92"/><stop offset=".35" stop-color="#b7a48c"/><stop offset=".7" stop-color="#c99a4c"/><stop offset="1" stop-color="#a87a34"/></linearGradient></defs><g clip-path="url(#avc1)"><rect width="100" height="100" fill="url(#avg1)"/><rect x="0" y="30" width="30" height="40" fill="#a9adb3" opacity=".7"/><circle cx="78" cy="22" r="9" fill="#f0c56a" opacity=".75"/><circle cx="90" cy="45" r="7" fill="#e8b04e" opacity=".7"/><circle cx="66" cy="10" r="6" fill="#f3d38a" opacity=".6"/><circle cx="20" cy="18" r="8" fill="#c9b79a" opacity=".6"/><path d="M14 100c0-24 8-36 22-40l8-4h12l8 4c14 4 22 16 22 40z" fill="#232321"/><path d="M44 50h12v9l-6 6-6-6z" fill="#b88a6c"/><ellipse cx="50" cy="37" rx="11.500" ry="14.500" fill="#c79c7e"/><path d="M38 35c-1.500-12 4-18 12-18s13.500 6 12 18c-1.500-6-4-9-12-9s-10.500 3-12 9z" fill="#1d1816"/><path d="M50 62v36" stroke="#3a3a36" stroke-width="1.500"/></g></svg>
<div style="left:2517.7px;top:139.5px;width:6.2px;height:6.2px;border-radius:50%;background:#fff;"></div>
<div style="left:2517.7px;top:148.4px;width:6.2px;height:6.2px;border-radius:50%;background:#fff;"></div>
<div style="left:2517.7px;top:157.3px;width:6.2px;height:6.2px;border-radius:50%;background:#fff;"></div>
<div style="left:27.5px;top:195.2px;width:6.0px;height:6.0px;background:#ea4335;"></div>
<div style="left:36.3px;top:195.2px;width:6.0px;height:6.0px;background:#ea4335;"></div>
<div style="left:45.1px;top:195.2px;width:6.0px;height:6.0px;background:#ea4335;"></div>
<div style="left:27.5px;top:204.0px;width:6.0px;height:6.0px;background:#34a853;"></div>
<div style="left:36.3px;top:204.0px;width:6.0px;height:6.0px;background:#4285f4;"></div>
<div style="left:45.1px;top:204.0px;width:6.0px;height:6.0px;background:#fbbc04;"></div>
<div style="left:27.5px;top:212.79999999999998px;width:6.0px;height:6.0px;background:#34a853;"></div>
<div style="left:36.3px;top:212.79999999999998px;width:6.0px;height:6.0px;background:#fbbc04;"></div>
<div style="left:45.1px;top:212.79999999999998px;width:6.0px;height:6.0px;background:#fbbc04;"></div>
<span class="t" style="left:68.1px;top:198.5px;font-size:20.6px;color:#fff;letter-spacing:0.96px;-webkit-text-stroke:0.27px;">Apps</span>
<svg style="left:149.3px;top:193.3px;" width="28.5" height="28.5" viewBox="0 0 28.5 28.5"><rect width="28.5" height="28.5" fill="#2a5cb4"/><path d="M9 9h10.500v2.200l-6.4 6.100h6.400V20H8.800v-2.200l6.4-6.100H9z" fill="#fff"/></svg>
<span class="t" style="left:193.2px;top:198.5px;font-size:20.6px;color:#fff;letter-spacing:0.13px;-webkit-text-stroke:0.27px;">SSLCOMMERZ Lo...</span>
<svg style="left:417px;top:193px;" width="30" height="29" viewBox="0 0 30 29"><g fill="none" stroke="#3fae3a" stroke-width="2"><path d="M29 1C15 3 6 10 8 27"/><path d="M24 3C13 6 5 13 4 25"/><path d="M19 5C10 8 3 14 1 22"/><path d="M27 4c-9 3-15 9-16 18"/></g></svg>
<span class="t" style="left:461.1px;top:198.5px;font-size:20.6px;color:#fff;letter-spacing:-0.17px;-webkit-text-stroke:0.27px;">ICC FTP SERVER</span>
<svg style="left:657.5px;top:193.5px;" width="29" height="29" viewBox="0 0 29 29"><rect x="9" y="7" width="19" height="21" rx="2" fill="#dfe1e5"/><path d="M2.5 0h14l4.5 22H2.500A2.5 2.5 0 0 1 0 19.500v-17A2.5 2.5 0 0 1 2.5 0z" fill="#4a8af4"/><path d="M13.5 10.200H9.200v2h2.200a2.6 2.6 0 1 1-.7-2.700l1.4-1.400a4.6 4.6 0 1 0 1.4 2.100z" fill="#fff"/><path d="M18 13h8M22 11.500V13M24.5 13c-.8 3-3 5.5-5.5 7M20 15.500c1 2 3 4 5 5" stroke="#5f6368" stroke-width="1.3" fill="none"/></svg>
<span class="t" style="left:701px;top:198.5px;font-size:20.6px;color:#fff;letter-spacing:0.69px;-webkit-text-stroke:0.27px;">Google Translate</span>
<svg style="left:900.5px;top:197px;" width="27" height="20.5" viewBox="0 0 27 20.5"><path d="M0 3v15.500a2 2 0 0 0 2 2h4V8.500z" fill="#4285f4"/><path d="M27 3v15.500a2 2 0 0 1-2 2h-4V8.500z" fill="#34a853"/><path d="M21 3.5 27 3v3l-6 4.500z" fill="#fbbc04"/><path d="M0 3l6 .5v7L0 6z" fill="#c5221f"/><path d="M6 3.500v7l7.5 5.600L21 10.500v-7l-7.5 5.600z" fill="#ea4335"/><path d="M0 3a2.6 2.6 0 0 1 4.2-2L6 2.300v2L0 6zM27 3a2.6 2.6 0 0 0-4.2-2L21 2.300v2L27 6z" fill="#ea4335"/></svg>
<span class="t" style="left:943px;top:198.5px;font-size:20.6px;color:#fff;letter-spacing:0.36px;-webkit-text-stroke:0.27px;">Gmail</span>
<svg style="left:1032.5px;top:193px;" width="20.5" height="29" viewBox="0 0 20.5 29"><path d="M10.250 0A10.250 10.250 0 0 0 0 10.250c0 7 8 11.5 10.250 18.750C12.5 21.750 20.5 17.250 20.5 10.250A10.250 10.250 0 0 0 10.250 0z" fill="#34a853"/><path d="M10.250 0A10.250 10.250 0 0 0 1 5.800l6.4 5.400L16.5 2.100A10.2 10.2 0 0 0 10.250 0z" fill="#ea4335"/><path d="M16.5 2.1 7.4 11.2 13 14.500l6.6-8.300a10.3 10.3 0 0 0-3.1-4.100z" fill="#4285f4"/><path d="M1 5.800A10.2 10.2 0 0 0 2.5 17l4.9-5.800z" fill="#fbbc04"/><circle cx="10.250" cy="10.250" r="3.6" fill="#fff"/></svg>
<span class="t" style="left:1072.4px;top:198.5px;font-size:20.6px;color:#fff;letter-spacing:0.7px;-webkit-text-stroke:0.27px;">Maps</span>
<svg style="left:1155.3px;top:197.5px;" width="28" height="20" viewBox="0 0 28 20"><rect width="28" height="20" rx="5.5" fill="#f00"/><path d="M11.2 5.700v8.600l7.3-4.300z" fill="#fff"/></svg>
<svg style="left:1212.4px;top:194px;" width="27.5" height="28" viewBox="0 0 27.5 28"><rect width="27.5" height="28" fill="#cfc6ee"/><rect x="0" y="0" width="27.5" height="5" fill="#b9aee6"/><path d="M7 27c0-7 2-12 6.750-12S20.5 20 20.5 27z" fill="#8fc0c9"/><circle cx="13.750" cy="13" r="5.5" fill="#f1e3c2"/><path d="M9 9l1.5-4 2.5 3M18.5 9 17 5l-2.5 3" fill="#f1e3c2"/><circle cx="11.8" cy="12.5" r=".9" fill="#333"/><circle cx="15.7" cy="12.5" r=".9" fill="#333"/></svg>
<span class="t" style="left:1256.2px;top:198.5px;font-size:20.6px;color:#fff;letter-spacing:0.65px;-webkit-text-stroke:0.27px;">Video Editing Onli...</span>
<svg style="left:1479px;top:193.5px;" width="28.5" height="28.5" viewBox="0 0 28 28"><circle cx="14" cy="14" r="14" fill="#1dbf73"/><path d="M8.3 12.200h1.700v-1.100c0-2.3 1.5-3.7 3.9-3.700h3.200v2.700h-2.500c-.9 0-1.4.4-1.4 1.200v.9h7.200v8.500h-3.200v-5.900h-4v5.900H10v-5.900H8.300z" fill="#fff"/><circle cx="18.5" cy="8.8" r="1.7" fill="#fff"/></svg>
<span class="t" style="left:1522.5px;top:198.5px;font-size:20.6px;color:#fff;letter-spacing:0.76px;-webkit-text-stroke:0.27px;">Help &amp; Support | F...</span>
<svg style="left:1752.8px;top:193.8px;" width="28" height="28" viewBox="0 0 28 28"><circle cx="14" cy="14" r="14" fill="#b5161c"/><path d="M7.8 12h1.800v-1c0-2.4 1.6-3.8 4-3.800h3v2.800h-2.200c-.9 0-1.4.4-1.4 1.200v.8h6.800v6.500h1.500v2.500h-6.500V18.500h1.700V14.700H13v3.800h1.500V21H8v-2.500h1.600v-3.800H7.800z" fill="#fff"/><circle cx="18.2" cy="8.8" r="1.8" fill="#fff"/></svg>
<span class="t" style="left:1796px;top:198.5px;font-size:20.6px;color:#fff;letter-spacing:0.75px;-webkit-text-stroke:0.27px;">Seller Dashboard</span>
<svg style="left:1998.4px;top:195.5px;" width="25.5" height="25.5" viewBox="0 0 25.5 25.5"><circle cx="12.750" cy="12.750" r="12.750" fill="#fff"/><path d="M5 6.500c2.5 0 3.5 1 3.2 3-.3 2 1.8 2.2 3.3 2.200s2.2 1.2 1.5 2.8-2.2 1.7-2 3.7-1 3.5-2.5 3.3-1-2.8-2.5-3.500S2.5 15 3 12.500zM16 3.500c-.5 2 .5 3 2.2 3s1.5 2 .2 2.8-1.4 2.5.3 3.2 3 .500 4.2-1a10 10 0 0 0-6.9-8zM19 16c-1.5-.3-2.8.8-2.5 2.200s-.7 2.5-.2 3.800a10.5 10.5 0 0 0 4.9-5.300z" fill="#a31550"/></svg>
<span class="t" style="left:2039.6px;top:198.5px;font-size:20.6px;color:#fff;letter-spacing:0.52px;-webkit-text-stroke:0.27px;">SSL Comerce Panel</span>
<span class="t" style="left:2317px;top:196.8px;font-size:22px;color:#fff;">»</span>
<div style="left:2349px;top:194.5px;width:1.5px;height:27.2px;background:#c05c88;"></div>
<svg style="left:2369.8px;top:195px;" width="25" height="26" viewBox="0 0 25 26"><rect x="1.3" y="1.3" width="22.4" height="23.4" fill="none" stroke="#fff" stroke-width="2.6"/><path d="M6 8h2.500M11 8h8.500M6 13h2.500M11 13h8.500M6 18h2.500M11 18h8.5" stroke="#fff" stroke-width="2.4"/></svg>
<span class="t" style="left:2411.5px;top:198.5px;font-size:20.6px;color:#fff;letter-spacing:0.65px;-webkit-text-stroke:0.27px;">Reading List</span>
<div style="left:0px;top:241.5px;width:2560px;height:113.3px;background:#5f6368;box-shadow:0 2px 7px rgba(0,0,0,.45);z-index:5;"></div>
<div style="left:0;top:0;width:2560px;height:1598px;z-index:6;pointer-events:none;">
<div style="left:40.7px;top:288.2px;width:32.4px;height:3.6px;background:#fff;"></div>
<div style="left:40.7px;top:297.1px;width:32.4px;height:3.6px;background:#fff;"></div>
<div style="left:40.7px;top:306px;width:32.4px;height:3.6px;background:#fff;"></div>
<svg style="left:108.5px;top:273.5px;" width="53" height="48" viewBox="0 0 53 48.5"><path d="M19 6.3 2.4 35.100a8.6 8.6 0 0 0 14.9 8.600L33.9 14.900z" fill="#fbbc04"/><path d="M19.1 6.100a8.6 8.6 0 0 1 14.9-.1l17.2 29.700a8.6 8.6 0 0 1-14.9 8.600z" fill="#4285f4"/><circle cx="9.8" cy="39.4" r="8.6" fill="#34a853"/></svg>
<span class="t" style="left:184.8px;top:279.05px;font-size:41.5px;color:#fff;letter-spacing:-0.77px;">Google</span>
<span class="t" style="left:329.9px;top:279.05px;font-size:41.5px;color:#fff;letter-spacing:-2.69px;">Ads</span>
<div style="left:426.5px;top:270.2px;width:1.6px;height:56.4px;background:#85888c;"></div>
<span class="t" style="left:459.7px;top:281.8px;font-size:36px;color:#fff;letter-spacing:0.22px;-webkit-text-stroke:0.86px;">All campaigns</span>
<svg style="left:1582.5px;top:268px;" width="32" height="32" viewBox="0 0 32 32"><circle cx="11.6" cy="11.6" r="9.4" fill="none" stroke="#fff" stroke-width="3.6"/><path d="M18.4 18.4 30.3 30.3" stroke="#fff" stroke-width="4.2"/></svg>
<span class="t" style="left:1571.7px;top:314.9px;font-size:13.8px;color:#fff;letter-spacing:-0.45px;-webkit-text-stroke:0.33px;">SEARCH</span>
<svg style="left:1678px;top:268.3px;" width="32.5" height="32.5" viewBox="0 0 32.5 32.5"><rect width="32.5" height="32.5" rx="3.6" fill="#fff"/><path d="M7.2 14.500h3.600v10.800H7.200zM14.4 7.200H18v18.100h-3.600zM21.7 18h3.600v7.300h-3.600z" fill="#5f6368"/></svg>
<span class="t" style="left:1663.3px;top:314.9px;font-size:13.8px;color:#fff;letter-spacing:-0.7px;-webkit-text-stroke:0.33px;">REPORTS</span>
<svg style="left:1783px;top:264px;" width="42.5" height="41.5" viewBox="0 0 42 42"><path d="M39.5 33.7 23.8 18c1.6-4 .7-8.6-2.5-11.800C17.9 2.7 12.8 2 8.7 3.900l7.4 7.4-5.2 5.2-7.6-7.400C1.3 13.2 2.2 18.3 5.6 21.700c3.2 3.2 7.9 4.1 11.8 2.500L33.1 39.900c.7.7 1.7.7 2.4 0l4-4c.8-.6.8-1.7 0-2.200z" fill="#fff"/></svg>
<span class="t" style="left:1775.3px;top:314.9px;font-size:13.8px;color:#fff;letter-spacing:-0.29px;-webkit-text-stroke:0.33px;">TOOLS &amp;</span>
<span class="t" style="left:1770.3px;top:330.9px;font-size:13.8px;color:#fff;letter-spacing:-0.19px;-webkit-text-stroke:0.33px;">SETTINGS</span>
<div style="left:1875.2px;top:270px;width:1.6px;height:57px;background:#85888c;"></div>
<svg style="left:1910.5px;top:266.3px;" width="36" height="36" viewBox="0 0 36 36"><circle cx="18" cy="18" r="18" fill="#fff"/><path d="M12.3 14.200c0-3.3 2.5-5.6 5.9-5.6 3.3 0 5.7 2.1 5.7 5.1 0 4-4.3 4.3-4.3 7.900h-3.300c0-4.8 4.2-5 4.2-7.8 0-1.3-1-2.2-2.4-2.2-1.5 0-2.5 1-2.5 2.600zM16.1 24h3.600v3.600h-3.600z" fill="#5f6368"/></svg>
<span class="t" style="left:1910.7px;top:314.9px;font-size:13.8px;color:#fff;letter-spacing:-0.18px;-webkit-text-stroke:0.33px;">HELP</span>
<svg style="left:2015px;top:267.5px;" width="30.5" height="35.5" viewBox="0 0 30.5 35.5"><path d="M15.250 35.500a3.6 3.6 0 0 0 3.6-3.600h-7.200a3.6 3.6 0 0 0 3.6 3.600zM26.1 24.700v-9c0-5.6-3-10.2-8.1-11.400V3a2.7 2.7 0 0 0-5.4 0v1.300C7.4 5.5 4.4 10.1 4.4 15.700v9L.8 28.300v1.800h28.900v-1.800z" fill="#fff"/></svg>
<div style="left:2032.0px;top:252.2px;width:35.6px;height:35.6px;border-radius:50%;background:#c5221f;"></div>
<div style="left:2047.7px;top:259.5px;width:4.2px;height:13.3px;background:#fff;"></div>
<div style="left:2047.7px;top:276px;width:4.2px;height:4.3px;background:#fff;"></div>
<span class="t" style="left:1978.3px;top:314.9px;font-size:13.8px;color:#fff;letter-spacing:-0.22px;-webkit-text-stroke:0.33px;">NOTIFICATIONS</span>
<span class="t" style="left:2307.5px;top:271.8px;font-size:22px;color:#fff;letter-spacing:-0.52px;">462-953-1670</span>
<span class="t" style="left:2121px;top:297.0px;font-size:21.6px;color:#fff;letter-spacing:-0.12px;">anisurrahmanniloy18@gmail.com</span>
<svg style="left:2460.7px;top:270.7px;" width="57.0" height="57.0" viewBox="0 0 100 100"><defs><clipPath id="avc2"><circle cx="50" cy="50" r="50"/></clipPath><linearGradient id="avg2" x1="0" y1="0" x2="1" y2="0"><stop offset="0" stop-color="#8d8f92"/><stop offset=".35" stop-color="#b7a48c"/><stop offset=".7" stop-color="#c99a4c"/><stop offset="1" stop-color="#a87a34"/></linearGradient></defs><g clip-path="url(#avc2)"><rect width="100" height="100" fill="url(#avg2)"/><rect x="0" y="30" width="30" height="40" fill="#a9adb3" opacity=".7"/><circle cx="78" cy="22" r="9" fill="#f0c56a" opacity=".75"/><circle cx="90" cy="45" r="7" fill="#e8b04e" opacity=".7"/><circle cx="66" cy="10" r="6" fill="#f3d38a" opacity=".6"/><circle cx="20" cy="18" r="8" fill="#c9b79a" opacity=".6"/><path d="M14 100c0-24 8-36 22-40l8-4h12l8 4c14 4 22 16 22 40z" fill="#232321"/><path d="M44 50h12v9l-6 6-6-6z" fill="#b88a6c"/><ellipse cx="50" cy="37" rx="11.500" ry="14.500" fill="#c79c7e"/><path d="M38 35c-1.500-12 4-18 12-18s13.500 6 12 18c-1.500-6-4-9-12-9s-10.500 3-12 9z" fill="#1d1816"/><path d="M50 62v36" stroke="#3a3a36" stroke-width="1.500"/></g></svg>
</div>
<div style="left:0px;top:354.8px;width:2560px;height:86.0px;background:#fce8e6;z-index:4;"></div>
<div style="left:0;top:0;width:2560px;height:1598px;z-index:4;">
<svg style="left:38px;top:389.5px;" width="13" height="18" viewBox="0 0 13 18"><path d="M11 1.5 2.5 9 11 16.5" stroke="#bdbdbd" stroke-width="2.7" fill="none"/></svg>
<span class="t" style="left:83.2px;top:388.8px;font-size:23px;color:#3c4043;letter-spacing:0.1px;">1 / 2</span>
<svg style="left:159.5px;top:389.5px;" width="13" height="18" viewBox="0 0 13 18"><path d="M2 1.5 10.5 9 2 16.5" stroke="#3c4043" stroke-width="2.7" fill="none"/></svg>
<div style="left:220.5px;top:386.6px;width:26.2px;height:26.2px;border-radius:50%;background:#d93025;"></div>
<div style="left:232px;top:392px;width:3.2px;height:10.4px;background:#fff;"></div>
<div style="left:232px;top:404.6px;width:3.2px;height:3.2px;background:#fff;"></div>
<span class="t" style="left:272px;top:386.8px;font-size:23px;color:#3c4043;font-weight:700;letter-spacing:-0.96px;">Your ads aren't running</span>
<span class="t" style="left:514.3px;top:386.8px;font-size:23px;color:#3c4043;letter-spacing:-0.06px;">- Make a payment towards your overdue account balance.</span>
<div style="left:2373.1px;top:369.9px;width:87.0px;height:56.5px;background:#d43a2f;border-radius:3.5px;box-shadow:0 1.5px 3px rgba(0,0,0,.38),0 1px 1px rgba(0,0,0,.2);"></div>
<span class="t" style="left:2386.7px;top:387.65px;font-size:23.3px;color:#fff;letter-spacing:-0.64px;-webkit-text-stroke:0.56px;">FIX IT</span>
<div style="left:2499.3px;top:383.6px;width:7.8px;height:7.8px;border-radius:50%;background:#3c3d3f;"></div>
<div style="left:2499.3px;top:394.3px;width:7.8px;height:7.8px;border-radius:50%;background:#3c3d3f;"></div>
<div style="left:2499.3px;top:405.0px;width:7.8px;height:7.8px;border-radius:50%;background:#3c3d3f;"></div>
</div>
<div style="left:0px;top:440.8px;width:2560px;height:1021.2px;background:#f1f3f4;"></div>
<div style="left:557.5px;top:500px;width:282.5px;height:35px;background:#fff;border-radius:0 0 20px 20px;box-shadow:0 1px 3px rgba(0,0,0,.3);"></div>
<div style="left:0px;top:440.8px;width:285.5px;height:1021.2px;background:#f1f3f4;border-right:1.5px solid #dadce0;border-top:1.5px solid #dadce0;box-sizing:border-box;"></div>
<div style="left:0px;top:457px;width:284.5px;height:70.3px;background:#dcdfe5;"></div>
<div style="left:0px;top:457px;width:7px;height:70.3px;background:#1a5fc9;"></div>
<span class="t" style="left:57.3px;top:479.8px;font-size:24px;color:#1a56b8;letter-spacing:-0.87px;-webkit-text-stroke:0.58px;">Overview</span>
<svg style="left:239.5px;top:480.5px;" width="26" height="23.5" viewBox="0 0 26 23.5"><path d="M10.4 23.500v-8.300h5.200v8.300h6.500V12.400H26L13 .5 0 12.400h3.900v11.100z" fill="#1a5fc9"/></svg>
<span class="t" style="left:57.3px;top:550.8px;font-size:24px;color:#3c4043;letter-spacing:-0.51px;">Recommendations</span>
<span class="t" style="left:57.3px;top:621.8px;font-size:24px;color:#3c4043;letter-spacing:-0.32px;">Insights</span>
<span class="t" style="left:57.3px;top:693.8px;font-size:24px;color:#3c4043;letter-spacing:-0.72px;">Campaigns</span>
<svg style="left:36px;top:698.3px;" width="7" height="12" viewBox="0 0 7 12"><path d="M.3.3 6.5 6 .3 11.700z" fill="#5f6368"/></svg>
<span class="t" style="left:57.3px;top:764.8px;font-size:24px;color:#3c4043;letter-spacing:-0.64px;">Ad groups</span>
<svg style="left:36px;top:769.4px;" width="7" height="12" viewBox="0 0 7 12"><path d="M.3.3 6.5 6 .3 11.700z" fill="#5f6368"/></svg>
<span class="t" style="left:57.3px;top:835.8px;font-size:24px;color:#3c4043;letter-spacing:-0.58px;">Ads &amp; extensions</span>
<svg style="left:36px;top:840.5px;" width="7" height="12" viewBox="0 0 7 12"><path d="M.3.3 6.5 6 .3 11.700z" fill="#5f6368"/></svg>
<span class="t" style="left:57.3px;top:906.8px;font-size:24px;color:#3c4043;letter-spacing:-0.65px;">Landing pages</span>
<svg style="left:36px;top:911.6px;" width="7" height="12" viewBox="0 0 7 12"><path d="M.3.3 6.5 6 .3 11.700z" fill="#5f6368"/></svg>
<span class="t" style="left:57.3px;top:977.8px;font-size:24px;color:#3c4043;letter-spacing:-0.84px;">Keywords</span>
<svg style="left:36px;top:982.7px;" width="7" height="12" viewBox="0 0 7 12"><path d="M.3.3 6.5 6 .3 11.700z" fill="#5f6368"/></svg>
<span class="t" style="left:57.3px;top:1048.8px;font-size:24px;color:#3c4043;letter-spacing:-0.7px;">Audiences</span>
<span class="t" style="left:57.3px;top:1119.8px;font-size:24px;color:#3c4043;letter-spacing:-0.49px;">Placements</span>
<svg style="left:36px;top:1124.9px;" width="7" height="12" viewBox="0 0 7 12"><path d="M.3.3 6.5 6 .3 11.700z" fill="#5f6368"/></svg>
<span class="t" style="left:57.3px;top:1190.8px;font-size:24px;color:#3c4043;letter-spacing:-0.48px;">Settings</span>
<svg style="left:36px;top:1196.0px;" width="7" height="12" viewBox="0 0 7 12"><path d="M.3.3 6.5 6 .3 11.700z" fill="#5f6368"/></svg>
<div style="left:42.7px;top:1245.6px;width:198.6px;height:1.6px;background:#dadce0;"></div>
<svg style="left:28.5px;top:1276.5px;" width="21" height="21" viewBox="0 0 21 21"><path d="M10.5 0v21M0 10.500h21" stroke="#3c4043" stroke-width="2.5"/></svg>
<span class="t" style="left:72px;top:1277.55px;font-size:23.5px;color:#3c4043;letter-spacing:-1.61px;-webkit-text-stroke:0.56px;">More</span>
<div style="left:253.9px;top:1285.4px;width:9.2px;height:9.2px;border-radius:50%;background:#1a73e8;"></div>
<div style="left:-29.5px;top:851.5px;width:55.0px;height:55.0px;border-radius:50%;background:#2d2f33;box-shadow:0 1px 4px rgba(0,0,0,.4);z-index:4;"></div>
<svg style="left:2px;top:868px;z-index:4;" width="14" height="22" viewBox="0 0 14 22"><path d="M2 2 11.5 11 2 20" stroke="#fff" stroke-width="2.8" fill="none"/></svg>
<div style="left:0px;top:1369.5px;width:284.5px;height:92.5px;background:#fff;border-top:1.5px solid #dadce0;box-sizing:border-box;"></div>
<svg style="left:30.5px;top:1396.8px;" width="25" height="40" viewBox="0 0 25 40"><rect x="0" y="0" width="25" height="40" rx="4" fill="#1a73e8"/><rect x="3.6" y="5.4" width="17.8" height="26.600" fill="#fff"/><path d="M10.700 10.200h3.600v6.600h4.200L12.500 23l-6-6.200h4.200z" fill="#1a73e8"/><path d="M7.300 26.500h10.400" stroke="#1a73e8" stroke-width="2.400"/><rect x="8.800" y="34.800" width="7.400" height="2.300" rx="1" fill="#fff"/></svg>
<span class="t" style="left:72px;top:1393.55px;font-size:22.5px;color:#1a73e8;letter-spacing:-1.02px;">Get the Google</span>
<span class="t" style="left:72px;top:1418.55px;font-size:22.5px;color:#1a73e8;letter-spacing:-0.7px;">Ads mobile app</span>
<div style="left:286px;top:440.8px;width:2260px;height:88.0px;background:#fff;box-shadow:0 2px 4px rgba(0,0,0,.32);z-index:3;"></div>
<div style="left:0;top:0;width:2560px;height:1598px;z-index:3;">
<svg style="left:321.5px;top:470.7px;" width="29" height="29" viewBox="0 0 29 29"><path d="M0 0h29L17.8 14v15h-6.600V14z" fill="#4285f4"/></svg>
<span class="t" style="left:386.6px;top:474.5px;font-size:23.6px;color:#4285f4;letter-spacing:-0.3px;">Campaign status:</span>
<span class="t" style="left:572.3px;top:474.5px;font-size:23.6px;color:#1a73e8;font-weight:700;letter-spacing:-1.38px;">All</span>
<span class="t" style="left:600.5px;top:474.5px;font-size:23.6px;color:#4285f4;">;</span>
<span class="t" style="left:610.4px;top:474.5px;font-size:23.6px;color:#4285f4;letter-spacing:-0.31px;">Ad group status:</span>
<span class="t" style="left:784.8px;top:474.5px;font-size:23.6px;color:#1a73e8;font-weight:700;letter-spacing:-1.38px;">All</span>
<span class="t" style="left:839.8px;top:475.45px;font-size:23.7px;color:#5f6368;letter-spacing:-0.38px;-webkit-text-stroke:0.57px;">ADD FILTER</span>
</div>
<div style="left:2546.3px;top:440.8px;width:13.7px;height:1021.2px;background:#eff1f4;"></div>
<div style="left:2546.3px;top:507px;width:13.7px;height:319px;background:#b4b4b4;"></div>
<div style="left:535px;top:570.5px;width:1763.5px;height:583.0px;background:#fff;box-shadow:0 1.5px 2.5px rgba(0,0,0,.36),0 2px 6px rgba(60,64,67,.22);border-radius:3px;"></div>
<div style="left:535px;top:570.5px;width:327px;height:142.0px;background:#1a73e8;border-radius:3px 0 0 0;"></div>
<div style="left:862px;top:570.5px;width:327.5px;height:142.0px;background:#d93025;"></div>
<div style="left:1189.5px;top:570.5px;width:326.5px;height:141.5px;background:#fff;border-right:1.5px solid #e3e3e3;border-bottom:1.5px solid #e3e3e3;box-sizing:border-box;"></div>
<div style="left:1516px;top:570.5px;width:327.5px;height:141.5px;background:#fff;border-right:1.5px solid #e3e3e3;border-bottom:1.5px solid #e3e3e3;box-sizing:border-box;"></div>
<span class="t" style="left:563px;top:603.55px;font-size:23.5px;color:#fff;letter-spacing:-0.34px;">Clicks</span>
<svg style="left:632.8px;top:610.3px;" width="16.5" height="8.3" viewBox="0 0 16.5 8.3"><path d="M0 0h16.500L8.250 8.300z" fill="#fff"/></svg>
<div style="left:563px;top:631.2px;width:92.7px;height:1.3px;background:rgba(255,255,255,.62);"></div>
<span class="t" style="left:563px;top:655.05px;font-size:40.5px;color:#fff;letter-spacing:0.62px;">69</span>
<span class="t" style="left:890.3px;top:603.55px;font-size:23.5px;color:#fff;letter-spacing:-0.15px;">Impressions</span>
<svg style="left:1024.4px;top:610.3px;" width="16.5" height="8.3" viewBox="0 0 16.5 8.3"><path d="M0 0h16.500L8.250 8.300z" fill="#fff"/></svg>
<div style="left:890.3px;top:631.2px;width:158.3px;height:1.3px;background:rgba(255,255,255,.62);"></div>
<span class="t" style="left:890.3px;top:655.05px;font-size:40.5px;color:#fff;letter-spacing:0.63px;">6.67K</span>
<span class="t" style="left:1218px;top:603.55px;font-size:23.5px;color:#3c4043;letter-spacing:-1.23px;">Avg. CPC</span>
<span class="t" style="left:1218px;top:655.05px;font-size:40.5px;color:#3c4043;letter-spacing:0.81px;">$2.45</span>
<span class="t" style="left:1544.6px;top:603.55px;font-size:23.5px;color:#3c4043;letter-spacing:-0.55px;">Cost</span>
<span class="t" style="left:1544.6px;top:655.05px;font-size:40.5px;color:#3c4043;letter-spacing:1.0px;">$169</span>
<div style="left:2258.35px;top:613.75px;width:6.9px;height:6.9px;border-radius:50%;background:#757575;"></div>
<div style="left:2258.35px;top:624.35px;width:6.9px;height:6.9px;border-radius:50%;background:#757575;"></div>
<div style="left:2258.35px;top:634.95px;width:6.9px;height:6.9px;border-radius:50%;background:#757575;"></div>
<div style="left:642.2px;top:769.4000000000001px;width:1549.2px;height:1.6px;background:#e3e3e3;"></div>
<div style="left:642.2px;top:924.9000000000001px;width:1549.2px;height:1.6px;background:#e3e3e3;"></div>
<div style="left:642.2px;top:1081.4px;width:1549.2px;height:1.6px;background:#e3e3e3;"></div>
<div style="left:662px;top:1082px;width:1.5px;height:10px;background:#d0d0d0;"></div>
<div style="left:2169.8px;top:1082px;width:1.5px;height:10px;background:#d0d0d0;"></div>
<span class="t" style="left:608px;top:760.55px;font-size:20.5px;color:#757575;letter-spacing:-0.07px;">70</span>
<span class="t" style="left:608px;top:915.55px;font-size:20.5px;color:#757575;letter-spacing:-0.07px;">35</span>
<span class="t" style="left:619.5px;top:1072.55px;font-size:20.5px;color:#757575;">0</span>
<span class="t" style="left:2203px;top:759.55px;font-size:20.5px;color:#757575;letter-spacing:-0.05px;">7K</span>
<span class="t" style="left:2203px;top:915.55px;font-size:20.5px;color:#757575;letter-spacing:-0.05px;">3.5K</span>
<span class="t" style="left:2203px;top:1072.55px;font-size:20.5px;color:#757575;">0</span>
<span class="t" style="left:663.5px;top:1100.55px;font-size:20.5px;color:#757575;letter-spacing:0.19px;">2 Nov 2020</span>
<span class="t" style="left:2051.4px;top:1100.55px;font-size:20.5px;color:#757575;letter-spacing:0.2px;">23 Aug 2021</span>
<svg style="left:640px;top:760px;" width="1560" height="340" viewBox="0 0 1560 340"><path d="M22.7 322.200H59.200L94.9 13.5 131 322.200H1530.4" fill="none" stroke="#1a73e8" stroke-width="3" stroke-linejoin="miter"/><path d="M22.7 322.200H59.200L94.9 23 131 322.200H1530.4" fill="none" stroke="#d93025" stroke-width="3" stroke-linejoin="miter"/></svg>
<div style="left:535px;top:1181.5px;width:867.5px;height:288.5px;background:#fff;box-shadow:0 1.5px 2.5px rgba(0,0,0,.36),0 2px 6px rgba(60,64,67,.22);border-radius:3px 3px 0 0;"></div>
<span class="t" style="left:563.6px;top:1227.05px;font-size:32.5px;color:#202124;letter-spacing:-0.6px;">Campaigns</span>
<div style="left:1362.75px;top:1224.85px;width:6.9px;height:6.9px;border-radius:50%;background:#757575;"></div>
<div style="left:1362.75px;top:1235.45px;width:6.9px;height:6.9px;border-radius:50%;background:#757575;"></div>
<div style="left:1362.75px;top:1246.05px;width:6.9px;height:6.9px;border-radius:50%;background:#757575;"></div>
<span class="t" style="left:901.3px;top:1294.8px;font-size:23px;color:#202124;letter-spacing:-0.14px;-webkit-text-stroke:0.92px;">Cost</span>
<svg style="left:1025.3px;top:1300.6px;" width="17.5" height="10" viewBox="0 0 17.5 10"><path d="M0 0h17.500L8.750 10z" fill="#202124"/></svg>
<div style="left:901.3px;top:1321.6px;width:149.0px;height:1.6px;background:#dadce0;"></div>
<span class="t" style="left:1071.8px;top:1294.8px;font-size:23px;color:#80868b;letter-spacing:-0.21px;">Clicks</span>
<svg style="left:1195.8px;top:1300.6px;" width="17.5" height="10" viewBox="0 0 17.5 10"><path d="M0 0h17.500L8.750 10z" fill="#757575"/></svg>
<div style="left:1071.8px;top:1321.6px;width:149.0px;height:1.6px;background:#dadce0;"></div>
<span class="t" style="left:1242.3px;top:1294.8px;font-size:23px;color:#80868b;letter-spacing:-2.27px;">CTR</span>
<svg style="left:1366.3px;top:1300.6px;" width="17.5" height="10" viewBox="0 0 17.5 10"><path d="M0 0h17.500L8.750 10z" fill="#757575"/></svg>
<div style="left:1242.3px;top:1321.6px;width:149.0px;height:1.6px;background:#dadce0;"></div>
<div style="left:535px;top:1338.4px;width:867.5px;height:1.5px;background:#e0e0e0;"></div>
<div style="left:891px;top:1339.5px;width:170.5px;height:84.5px;background:#7baaf0;"></div>
<div style="left:1061.5px;top:1339.5px;width:170.5px;height:84.5px;background:#dcdcdc;"></div>
<div style="left:1232.0px;top:1339.5px;width:170.5px;height:84.5px;background:#e2e2e2;"></div>
<div style="left:535px;top:1423.5px;width:867.5px;height:1.5px;background:#e0e0e0;"></div>
<div style="left:535px;top:1425px;width:356px;height:45px;background:#fafafa;"></div>
<div style="left:891px;top:1425px;width:170.5px;height:45px;background:#c7d9f5;"></div>
<div style="left:1061.5px;top:1425px;width:170.5px;height:45px;background:#f4f4f4;"></div>
<div style="left:1232.0px;top:1425px;width:170.5px;height:45px;background:#eeeeee;"></div>
<div style="left:564.4px;top:1371.4px;width:19.2px;height:19.2px;border-radius:50%;background:#c5221f;"></div>
<svg style="left:569px;top:1376px;" width="10" height="10" viewBox="0 0 10 10"><path d="M1.3 1.3 8.7 8.700M8.7 1.3 1.3 8.7" stroke="#fff" stroke-width="2.4"/></svg>
<span class="t" style="left:601.3px;top:1370.8px;font-size:23px;color:#5f6368;letter-spacing:-0.04px;">Top Life Insurance</span>
<span class="t" style="left:920.2px;top:1370.8px;font-size:23px;color:#3c4043;letter-spacing:-0.49px;">US$169.07</span>
<span class="t" style="left:1177.7px;top:1370.8px;font-size:23px;color:#3c4043;letter-spacing:-1.2px;">69</span>
<span class="t" style="left:1312.4px;top:1370.8px;font-size:23px;color:#3c4043;letter-spacing:-1.12px;">1.03%</span>
<div style="left:564.5px;top:1456.5px;width:19.0px;height:19.0px;border-radius:50%;background:#188038;"></div>
<span class="t" style="left:601.3px;top:1455.8px;font-size:23px;color:#1a67d2;letter-spacing:-0.39px;">Google Search Ad</span>
<span class="t" style="left:944px;top:1455.8px;font-size:23px;color:#3c4043;letter-spacing:-0.39px;">US$0.00</span>
<span class="t" style="left:1190px;top:1455.8px;font-size:23px;color:#3c4043;">0</span>
<span class="t" style="left:1312.4px;top:1455.8px;font-size:23px;color:#3c4043;letter-spacing:-1.12px;">0.00%</span>
<div style="left:1431px;top:1181.5px;width:867.5px;height:288.5px;background:#fff;box-shadow:0 1.5px 2.5px rgba(0,0,0,.36),0 2px 6px rgba(60,64,67,.22);border-radius:3px 3px 0 0;"></div>
<span class="t" style="left:1459px;top:1221.05px;font-size:32.5px;color:#202124;letter-spacing:-0.63px;">Search keywords</span>
<div style="left:2258.75px;top:1224.85px;width:6.9px;height:6.9px;border-radius:50%;background:#757575;"></div>
<div style="left:2258.75px;top:1235.45px;width:6.9px;height:6.9px;border-radius:50%;background:#757575;"></div>
<div style="left:2258.75px;top:1246.05px;width:6.9px;height:6.9px;border-radius:50%;background:#757575;"></div>
<span class="t" style="left:1797.3px;top:1294.8px;font-size:23px;color:#202124;letter-spacing:-0.14px;-webkit-text-stroke:0.92px;">Cost</span>
<svg style="left:1921.3px;top:1300.6px;" width="17.5" height="10" viewBox="0 0 17.5 10"><path d="M0 0h17.500L8.750 10z" fill="#202124"/></svg>
<div style="left:1797.3px;top:1321.6px;width:149.0px;height:1.6px;background:#dadce0;"></div>
<span class="t" style="left:1967.8px;top:1294.8px;font-size:23px;color:#80868b;letter-spacing:-0.21px;">Clicks</span>
<svg style="left:2091.8px;top:1300.6px;" width="17.5" height="10" viewBox="0 0 17.5 10"><path d="M0 0h17.500L8.750 10z" fill="#757575"/></svg>
<div style="left:1967.8px;top:1321.6px;width:149.0px;height:1.6px;background:#dadce0;"></div>
<span class="t" style="left:2138.3px;top:1294.8px;font-size:23px;color:#80868b;letter-spacing:-2.27px;">CTR</span>
<svg style="left:2262.3px;top:1300.6px;" width="17.5" height="10" viewBox="0 0 17.5 10"><path d="M0 0h17.500L8.750 10z" fill="#757575"/></svg>
<div style="left:2138.3px;top:1321.6px;width:149.0px;height:1.6px;background:#dadce0;"></div>
<div style="left:1431px;top:1338.4px;width:867.5px;height:1.5px;background:#e0e0e0;"></div>
<div style="left:1787px;top:1339.5px;width:170.5px;height:84.5px;background:#7baaf0;"></div>
<div style="left:1957.5px;top:1339.5px;width:170.5px;height:84.5px;background:#dcdcdc;"></div>
<div style="left:2128.0px;top:1339.5px;width:170.5px;height:84.5px;background:#e2e2e2;"></div>
<div style="left:1431px;top:1423.5px;width:867.5px;height:1.5px;background:#e0e0e0;"></div>
<div style="left:1431px;top:1425px;width:356px;height:45px;background:#fafafa;"></div>
<div style="left:1787px;top:1425px;width:170.5px;height:45px;background:#c7d9f5;"></div>
<div style="left:1957.5px;top:1425px;width:170.5px;height:45px;background:#f4f4f4;"></div>
<div style="left:2128.0px;top:1425px;width:170.5px;height:45px;background:#eeeeee;"></div>
<div style="left:1459.8px;top:1370.8px;width:20.4px;height:20.4px;border-radius:50%;background:#188038;"></div>
<span class="t" style="left:1497.3px;top:1370.8px;font-size:23px;color:#1a67d2;letter-spacing:-0.05px;">life insurance</span>
<span class="t" style="left:1815.6px;top:1370.8px;font-size:23px;color:#3c4043;letter-spacing:-0.36px;">US$102.47</span>
<span class="t" style="left:2072.6px;top:1370.8px;font-size:23px;color:#3c4043;letter-spacing:-0.13px;">35</span>
<span class="t" style="left:2207.6px;top:1370.8px;font-size:23px;color:#3c4043;letter-spacing:-1.07px;">1.57%</span>
<div style="left:1460.5px;top:1456.5px;width:19.0px;height:19.0px;border-radius:50%;background:#188038;"></div>
<span class="t" style="left:1497.3px;top:1455.8px;font-size:23px;color:#1a67d2;letter-spacing:-0.23px;">life insurance companies</span>
<span class="t" style="left:1828px;top:1455.8px;font-size:23px;color:#3c4043;letter-spacing:-0.13px;">US$11.57</span>
<span class="t" style="left:2086.5px;top:1455.8px;font-size:23px;color:#3c4043;">5</span>
<span class="t" style="left:2207.6px;top:1455.8px;font-size:23px;color:#3c4043;letter-spacing:-1.07px;">1.22%</span>
<div style="left:2018.9px;top:1227.7px;width:22.6px;height:22.6px;border-radius:50%;background:#1a67d2;"></div>
<svg style="left:2023.7px;top:1232.5px;" width="13" height="13" viewBox="0 0 13 13"><path d="M6.5 0v13M0 6.500h13" stroke="#fff" stroke-width="2.6"/></svg>
<span class="t" style="left:2052.5px;top:1228.8px;font-size:23px;color:#1a67d2;letter-spacing:-1.32px;-webkit-text-stroke:0.55px;">ADD KEYWORD</span>
<div style="left:0;top:44px;width:2558.5px;height:40px;border-radius:16px 16px 0 0;border:1.6px solid rgba(214,130,170,.7);border-bottom:none;box-sizing:border-box;-webkit-mask-image:linear-gradient(180deg,#000 40%,transparent);z-index:9;pointer-events:none;"></div>
</div></div>
<div style="left:0;top:1462px;width:2560px;height:10px;background:linear-gradient(180deg,rgba(20,8,4,.75),rgba(20,8,4,0));"></div>
<div style="left:87.5px;top:1469.5px;width:2384px;height:120.5px;border-radius:27px;background:linear-gradient(90deg,#734623 0%,#6c4a2e 14%,#64503c 34%,#714a2c 58%,#66503e 70%,#5b3a30 84%,#5a342a 100%);box-shadow:inset 0 0 0 1.5px rgba(255,255,255,.2),0 0 0 1px rgba(0,0,0,.3);"></div>
<svg style="left:105.6px;top:1486.3px" width="77" height="77" viewBox="0 0 77 77" preserveAspectRatio="none"><defs><linearGradient id="fn1" x1="0" y1="0" x2="0" y2="1"><stop offset="0" stop-color="#20b6fb"/><stop offset="1" stop-color="#1a6be0"/></linearGradient><linearGradient id="fn2" x1="0" y1="0" x2="0" y2="1"><stop offset="0" stop-color="#f4f5fa"/><stop offset="1" stop-color="#d3d9e6"/></linearGradient><clipPath id="fnc"><rect width="77" height="77" rx="17.5"/></clipPath></defs><g clip-path="url(#fnc)"><rect width="77" height="77" fill="url(#fn1)"/><path d="M43 0c-6 12-9.5 26-10 43h8.500c-.5 12 1 24 4 34H77V0z" fill="url(#fn2)"/><path d="M14 52c9 9.5 38 10 48-1" stroke="#1c1c1e" stroke-width="2.6" fill="none" stroke-linecap="round"/><rect x="18.5" y="21.5" width="3.4" height="8.5" rx="1.7" fill="#1c1c1e"/><rect x="55" y="21.5" width="3.4" height="8.5" rx="1.7" fill="#1c1c1e"/><path d="M43 0c-6 12-9.5 26-10 43h8.500c-.5 12 1 24 4 34" stroke="#1c1c1e" stroke-width="0" fill="none"/></g></svg>
<div style="left:141.5px;top:1581.1px;width:5.4px;height:5.4px;border-radius:50%;background:#e6cdb8;"></div>
<svg style="left:210.2px;top:1486.3px" width="77" height="77" viewBox="0 0 77 77" preserveAspectRatio="none"><rect width="77" height="77" rx="17.5" fill="#d3c9c1"/><rect x="12.0" y="13.5" width="14.5" height="13.5" rx="4" fill="#3fd13a"/><rect x="30.7" y="13.5" width="14.5" height="13.5" rx="4" fill="#fcc40d"/><rect x="49.4" y="13.5" width="14.5" height="13.5" rx="4" fill="#ee8a0d"/><rect x="12.0" y="32.2" width="14.5" height="13.5" rx="4" fill="#e9201d"/><rect x="30.7" y="32.2" width="14.5" height="13.5" rx="4" fill="#a9b0b8"/><rect x="49.4" y="32.2" width="14.5" height="13.5" rx="4" fill="#fb3f68"/><rect x="12.0" y="50.9" width="14.5" height="13.5" rx="4" fill="#a24fe0"/><rect x="30.7" y="50.9" width="14.5" height="13.5" rx="4" fill="#1f8ef7"/><rect x="49.4" y="50.9" width="14.5" height="13.5" rx="4" fill="#19c29a"/></svg>
<svg style="left:313.3px;top:1486.3px" width="77" height="77" viewBox="0 0 77 77" preserveAspectRatio="none"><defs><linearGradient id="sf1" x1="0" y1="0" x2="0" y2="1"><stop offset="0" stop-color="#1fb4f5"/><stop offset="1" stop-color="#1e6fe8"/></linearGradient></defs><rect width="77" height="77" rx="17.5" fill="#f4f4f6"/><circle cx="38.5" cy="38.5" r="32.5" fill="url(#sf1)"/><path d="M38.5 8.500v5" stroke="#fff" stroke-width="1" transform="rotate(0 38.5 38.5)"/><path d="M38.5 8.500v3" stroke="#fff" stroke-width="1" transform="rotate(10 38.5 38.5)"/><path d="M38.5 8.500v5" stroke="#fff" stroke-width="1" transform="rotate(20 38.5 38.5)"/><path d="M38.5 8.500v3" stroke="#fff" stroke-width="1" transform="rotate(30 38.5 38.5)"/><path d="M38.5 8.500v5" stroke="#fff" stroke-width="1" transform="rotate(40 38.5 38.5)"/><path d="M38.5 8.500v3" stroke="#fff" stroke-width="1" transform="rotate(50 38.5 38.5)"/><path d="M38.5 8.500v5" stroke="#fff" stroke-width="1" transform="rotate(60 38.5 38.5)"/><path d="M38.5 8.500v3" stroke="#fff" stroke-width="1" transform="rotate(70 38.5 38.5)"/><path d="M38.5 8.500v5" stroke="#fff" stroke-width="1" transform="rotate(80 38.5 38.5)"/><path d="M38.5 8.500v3" stroke="#fff" stroke-width="1" transform="rotate(90 38.5 38.5)"/><path d="M38.5 8.500v5" stroke="#fff" stroke-width="1" transform="rotate(100 38.5 38.5)"/><path d="M38.5 8.500v3" stroke="#fff" stroke-width="1" transform="rotate(110 38.5 38.5)"/><path d="M38.5 8.500v5" stroke="#fff" stroke-width="1" transform="rotate(120 38.5 38.5)"/><path d="M38.5 8.500v3" stroke="#fff" stroke-width="1" transform="rotate(130 38.5 38.5)"/><path d="M38.5 8.500v5" stroke="#fff" stroke-width="1" transform="rotate(140 38.5 38.5)"/><path d="M38.5 8.500v3" stroke="#fff" stroke-width="1" transform="rotate(150 38.5 38.5)"/><path d="M38.5 8.500v5" stroke="#fff" stroke-width="1" transform="rotate(160 38.5 38.5)"/><path d="M38.5 8.500v3" stroke="#fff" stroke-width="1" transform="rotate(170 38.5 38.5)"/><path d="M38.5 8.500v5" stroke="#fff" stroke-width="1" transform="rotate(180 38.5 38.5)"/><path d="M38.5 8.500v3" stroke="#fff" stroke-width="1" transform="rotate(190 38.5 38.5)"/><path d="M38.5 8.500v5" stroke="#fff" stroke-width="1" transform="rotate(200 38.5 38.5)"/><path d="M38.5 8.500v3" stroke="#fff" stroke-width="1" transform="rotate(210 38.5 38.5)"/><path d="M38.5 8.500v5" stroke="#fff" stroke-width="1" transform="rotate(220 38.5 38.5)"/><path d="M38.5 8.500v3" stroke="#fff" stroke-width="1" transform="rotate(230 38.5 38.5)"/><path d="M38.5 8.500v5" stroke="#fff" stroke-width="1" transform="rotate(240 38.5 38.5)"/><path d="M38.5 8.500v3" stroke="#fff" stroke-width="1" transform="rotate(250 38.5 38.5)"/><path d="M38.5 8.500v5" stroke="#fff" stroke-width="1" transform="rotate(260 38.5 38.5)"/><path d="M38.5 8.500v3" stroke="#fff" stroke-width="1" transform="rotate(270 38.5 38.5)"/><path d="M38.5 8.500v5" stroke="#fff" stroke-width="1" transform="rotate(280 38.5 38.5)"/><path d="M38.5 8.500v3" stroke="#fff" stroke-width="1" transform="rotate(290 38.5 38.5)"/><path d="M38.5 8.500v5" stroke="#fff" stroke-width="1" transform="rotate(300 38.5 38.5)"/><path d="M38.5 8.500v3" stroke="#fff" stroke-width="1" transform="rotate(310 38.5 38.5)"/><path d="M38.5 8.500v5" stroke="#fff" stroke-width="1" transform="rotate(320 38.5 38.5)"/><path d="M38.5 8.500v3" stroke="#fff" stroke-width="1" transform="rotate(330 38.5 38.5)"/><path d="M38.5 8.500v5" stroke="#fff" stroke-width="1" transform="rotate(340 38.5 38.5)"/><path d="M38.5 8.500v3" stroke="#fff" stroke-width="1" transform="rotate(350 38.5 38.5)"/><path d="M62 15 34.5 34.5 42.5 42.500z" fill="#f3342f"/><path d="M15 62 34.5 34.5 42.5 42.500z" fill="#f5f5f5"/></svg>
<svg style="left:416.3px;top:1486.3px" width="77" height="77" viewBox="0 0 77 77" preserveAspectRatio="none"><rect width="77" height="77" rx="17.5" fill="#fdfdfd"/><g transform="translate(38.5 38.5)"><circle r="32" fill="#fbc116"/><path d="M0 0 -27.7 -16A32 32 0 0 1 27.7 -16z" fill="#e33b2e"/><path d="M0 0-27.7-16A32 32 0 0 0 0 32L13.9 8z" fill="#1fa463" transform="rotate(0)"/><path d="M-27.7-16A32 32 0 0 0 -1 32L13 7.500z" fill="#1fa463"/><path d="M27.7-16H0L13.9 8 0 32A32 32 0 0 0 27.7-16z" fill="#fbc116"/><circle r="14.8" fill="#fff"/><circle r="11.8" fill="#4a8af4"/></g></svg>
<div style="left:452.1px;top:1581.1px;width:5.4px;height:5.4px;border-radius:50%;background:#e6cdb8;"></div>
<svg style="left:521.4px;top:1486.3px" width="77" height="77" viewBox="0 0 77 77" preserveAspectRatio="none"><defs><linearGradient id="ml1" x1="0" y1="0" x2="0" y2="1"><stop offset="0" stop-color="#1b62f0"/><stop offset="1" stop-color="#24c7fc"/></linearGradient></defs><rect width="77" height="77" rx="17.5" fill="url(#ml1)"/><rect x="11" y="21" width="55" height="35.5" rx="4.5" fill="#f3f3f3"/><path d="M12 23 33 42c3.5 3 7.5 3 11 0L65 23" stroke="#c9c9c9" stroke-width="2" fill="none"/><path d="M12 55 30 39M65 55 47 39" stroke="#d6d6d6" stroke-width="1.8" fill="none"/></svg>
<div style="left:557.2px;top:1581.1px;width:5.4px;height:5.4px;border-radius:50%;background:#e6cdb8;"></div>
<div style="left:553.6px;top:1478.2px;width:57.3px;height:35.4px;border-radius:17.7px;background:#f23b3e;box-shadow:0 1px 2px rgba(0,0,0,.3);"></div>
<span class="t" style="left:561.5px;top:1486.55px;font-size:20.5px;color:#fff;letter-spacing:-2.07px;">2,474</span>
<svg style="left:624.4px;top:1486.3px" width="77" height="77" viewBox="0 0 77 77" preserveAspectRatio="none"><defs><linearGradient id="ms1" x1="0" y1="0" x2="0" y2="1"><stop offset="0" stop-color="#5ff277"/><stop offset="1" stop-color="#0cbc2b"/></linearGradient><linearGradient id="ms2" x1="0" y1="0" x2="0" y2="1"><stop offset="0" stop-color="#ffffff"/><stop offset="1" stop-color="#d9f5dc"/></linearGradient></defs><rect width="77" height="77" rx="17.5" fill="url(#ms1)"/><path d="M38.5 14c15.7 0 28.5 10 28.5 22.500S54.2 59 38.5 59c-3 0-5.9-.4-8.6-1-2.5 2.6-6.2 4.3-10.4 4.6 2.2-2 3.4-4.7 3.6-7.600C15.2 51 10 44.2 10 36.5 10 24 22.8 14 38.5 14z" fill="url(#ms2)"/></svg>
<svg style="left:728px;top:1486.3px" width="79" height="77" viewBox="0 0 79 77" preserveAspectRatio="none"><rect x="6" y="10" width="73" height="58" rx="8" fill="#d8d2c8"/><rect x="72" y="20" width="7" height="12" fill="#3aa0f0"/><rect x="72" y="32" width="7" height="12" fill="#f29d1d"/><rect x="72" y="44" width="7" height="12" fill="#3fbf3f"/><rect width="74" height="77" rx="17.5" fill="#ac8746"/><circle cx="38" cy="38" r="23.5" fill="none" stroke="#96743a" stroke-width="1.8"/><circle cx="38" cy="31.5" r="8.3" fill="#96743a"/><path d="M20.5 53.500c3-8 9.5-10.5 17.5-10.500s14.5 2.5 17.5 10.500A23.5 23.5 0 0 1 20.5 53.500z" fill="#96743a"/></svg>
<svg style="left:832px;top:1486.3px" width="77" height="77" viewBox="0 0 77 77" preserveAspectRatio="none"><defs><clipPath id="clc"><rect width="77" height="77" rx="17.5"/></clipPath></defs><g clip-path="url(#clc)"><rect width="77" height="77" fill="#fbfbfb"/><rect width="77" height="23.5" fill="#f0453f"/></g></svg>
<span class="t" style="left:854.5px;top:1491.3px;font-size:17px;color:#fff;font-weight:700;letter-spacing:-1.91px;">AUG</span>
<span class="t" style="left:845px;top:1512.05px;font-size:47.5px;color:#2b2b2b;letter-spacing:-0.9px;font-family:&quot;Liberation Sans&quot;,sans-serif;">25</span>
<svg style="left:935px;top:1486.3px" width="77" height="77" viewBox="0 0 77 77" preserveAspectRatio="none"><defs><clipPath id="ntc"><rect width="77" height="77" rx="17.5"/></clipPath><linearGradient id="nt1" x1="0" y1="0" x2="0" y2="1"><stop offset="0" stop-color="#fcfcfb"/><stop offset="1" stop-color="#e9e7e3"/></linearGradient></defs><g clip-path="url(#ntc)"><rect width="77" height="77" fill="url(#nt1)"/><rect width="77" height="20.5" fill="#fdcd23"/><path d="M0 21h77" stroke="#bdbdb5" stroke-width="1" stroke-dasharray="1.5 1.5"/><path d="M0 39h77M0 57.500h77" stroke="#d4d2cd" stroke-width="1.2"/></g></svg>
<div style="left:971.5px;top:1581.1px;width:5.4px;height:5.4px;border-radius:50%;background:#e6cdb8;"></div>
<svg style="left:1038px;top:1486.3px" width="77" height="77" viewBox="0 0 77 77" preserveAspectRatio="none"><defs><linearGradient id="mu1" x1="0" y1="0" x2="0" y2="1"><stop offset="0" stop-color="#fb5a72"/><stop offset="1" stop-color="#f9233c"/></linearGradient></defs><rect width="77" height="77" rx="17.5" fill="url(#mu1)"/><path d="M30 22.5 56 15.500v34.500a7.3 6.3 0 1 1-4.6-5.800V27.500L34.6 32v23.200a7.3 6.3 0 1 1-4.6-5.800z" fill="#fff"/></svg>
<div style="left:1074.5px;top:1581.1px;width:5.4px;height:5.4px;border-radius:50%;background:#e6cdb8;"></div>
<svg style="left:1141px;top:1486.3px" width="77" height="77" viewBox="0 0 77 77" preserveAspectRatio="none"><defs><linearGradient id="pc1" x1="0" y1="0" x2="0" y2="1"><stop offset="0" stop-color="#c861f8"/><stop offset="1" stop-color="#7a2bc4"/></linearGradient></defs><rect width="77" height="77" rx="17.5" fill="url(#pc1)"/><g fill="none" stroke="#fff" stroke-width="3.2" stroke-linecap="round"><path d="M23.5 58.500A26 26 0 1 1 53.5 58.5"/><path d="M28.5 49A16 16 0 1 1 48.5 49"/></g><circle cx="38.5" cy="35.5" r="6.5" fill="#fff"/><path d="M33 50c0-4 2.5-5.5 5.5-5.500S44 46 44 50l-1.8 15c-.3 2.2-1.7 3.2-3.7 3.200s-3.4-1-3.7-3.200z" fill="#fff"/></svg>
<svg style="left:1246.7px;top:1486.3px" width="77" height="77" viewBox="0 0 77 77" preserveAspectRatio="none"><defs><linearGradient id="tv1" x1="0" y1="0" x2="0" y2="1"><stop offset="0" stop-color="#1d2a29"/><stop offset="1" stop-color="#0c1112"/></linearGradient></defs><rect width="77" height="77" rx="17.5" fill="url(#tv1)"/><path fill="#fff" transform="translate(9.300 21.200) scale(1.120)" d="M17.6 14.9c0-3 2.500-4.500 2.600-4.600-1.400-2.100-3.600-2.400-4.400-2.400-1.900-.2-3.700 1.100-4.600 1.100-1 0-2.400-1.100-4-1.100C5.100 8 3.200 9.100 2.100 11c-2.200 3.900-.6 9.600 1.600 12.700 1.100 1.500 2.300 3.300 4 3.200 1.600-.1 2.200-1 4.100-1s2.500 1 4.200 1c1.700 0 2.800-1.600 3.900-3.100 1.200-1.800 1.700-3.500 1.700-3.600-.1 0-3.900-1.500-4-5.300zM14.400 5.600c.9-1.100 1.500-2.600 1.300-4.100-1.300.1-2.800.9-3.700 1.900-.8.900-1.500 2.500-1.300 3.900 1.400.1 2.800-.7 3.700-1.700z"/></svg>
<span class="t" style="left:1284.8px;top:1506.3px;font-size:35px;color:#fff;letter-spacing:0.98px;-webkit-text-stroke:0.84px;">tv</span>
<svg style="left:1350.3px;top:1486.3px" width="77" height="77" viewBox="0 0 77 77" preserveAspectRatio="none"><defs><clipPath id="nmc"><rect width="77" height="77" rx="17.5"/></clipPath></defs><g clip-path="url(#nmc)"><rect width="77" height="77" fill="#fefefe"/><path d="M6.0 3v71M3 6.0h71" stroke="#cfe6cf" stroke-width=".7"/><path d="M11.9 3v71M3 11.9h71" stroke="#cfe6cf" stroke-width=".7"/><path d="M17.8 3v71M3 17.8h71" stroke="#cfe6cf" stroke-width=".7"/><path d="M23.700000000000003 3v71M3 23.700000000000003h71" stroke="#cfe6cf" stroke-width=".7"/><path d="M29.6 3v71M3 29.6h71" stroke="#cfe6cf" stroke-width=".7"/><path d="M35.5 3v71M3 35.5h71" stroke="#cfe6cf" stroke-width=".7"/><path d="M41.400000000000006 3v71M3 41.400000000000006h71" stroke="#cfe6cf" stroke-width=".7"/><path d="M47.300000000000004 3v71M3 47.300000000000004h71" stroke="#cfe6cf" stroke-width=".7"/><path d="M53.2 3v71M3 53.2h71" stroke="#cfe6cf" stroke-width=".7"/><path d="M59.1 3v71M3 59.1h71" stroke="#cfe6cf" stroke-width=".7"/><path d="M65.0 3v71M3 65.0h71" stroke="#cfe6cf" stroke-width=".7"/><path d="M70.9 3v71M3 70.9h71" stroke="#cfe6cf" stroke-width=".7"/></g><rect x="14" y="41" width="11" height="26" rx="1.5" fill="#e8324a"/><rect x="26.5" y="26" width="11" height="41" rx="1.5" fill="#f5950d"/><rect x="39" y="10.5" width="11" height="56.5" rx="1.5" fill="#35c23f"/><rect x="51.5" y="18.5" width="11" height="48.5" rx="1.5" fill="#1f8ef5"/></svg>
<svg style="left:1453.3px;top:1486.3px" width="77" height="77" viewBox="0 0 77 77" preserveAspectRatio="none"><defs><linearGradient id="as1" x1="0" y1="0" x2="0" y2="1"><stop offset="0" stop-color="#1ab0f7"/><stop offset="1" stop-color="#1d62ea"/></linearGradient></defs><rect width="77" height="77" rx="17.5" fill="url(#as1)"/><g stroke="#fff" stroke-width="5.6" stroke-linecap="round" fill="none"><path d="M41.5 17 20.5 54.500M33.5 17 57.5 59M14 47.500h24.500M47.5 47.500H63M17.5 59.500l-1.7 3"/></g></svg>
<svg style="left:1558.4px;top:1486.3px" width="77" height="77" viewBox="0 0 77 77" preserveAspectRatio="none"><defs><clipPath id="pgc"><rect width="77" height="77" rx="17.5"/></clipPath></defs><g clip-path="url(#pgc)"><rect width="77" height="77" fill="#fefefd"/><path d="M0 10.0h77" stroke="#f3d2c4" stroke-width=".9"/><path d="M0 15.6h77" stroke="#f3d2c4" stroke-width=".9"/><path d="M0 21.2h77" stroke="#f3d2c4" stroke-width=".9"/><path d="M0 26.799999999999997h77" stroke="#f3d2c4" stroke-width=".9"/><path d="M0 32.4h77" stroke="#f3d2c4" stroke-width=".9"/><path d="M0 38.0h77" stroke="#f3d2c4" stroke-width=".9"/><path d="M0 43.599999999999994h77" stroke="#f3d2c4" stroke-width=".9"/><path d="M0 49.199999999999996h77" stroke="#f3d2c4" stroke-width=".9"/><path d="M0 54.8h77" stroke="#f3d2c4" stroke-width=".9"/><path d="M0 60.4h77" stroke="#f3d2c4" stroke-width=".9"/><path d="M0 66.0h77" stroke="#f3d2c4" stroke-width=".9"/><path d="M0 71.6h77" stroke="#f3d2c4" stroke-width=".9"/><rect x="4" y="7" width="27" height="22" fill="#fffdfa" stroke="#f3dccf" stroke-width=".8"/></g><path d="M57.5 6.5 62.5 9.5 36.5 53.5 31.5 50.500z" fill="#f7a51c"/><path d="M59 7.5 48 26" stroke="#9fb6d6" stroke-width="2.2"/><path d="M36.5 53.5 31.5 50.5 26 60.5 24.5 69 30.5 63.500z" fill="#2a2a2c"/><path d="M24.5 69 25.5 63 29.5 65z" fill="#c9c9c9"/></svg>
<span class="t" style="left:1567.5px;top:1488.3px;font-size:52px;color:#f09a1c;font-weight:700;font-family:&quot;Liberation Serif&quot;,serif;">“</span>
<svg style="left:1661.4px;top:1486.3px" width="77" height="77" viewBox="0 0 77 77" preserveAspectRatio="none"><defs><linearGradient id="sp1" x1="0" y1="0" x2="0" y2="1"><stop offset="0" stop-color="#d9dadd"/><stop offset="1" stop-color="#7e8083"/></linearGradient><linearGradient id="sp2" x1="0" y1="0" x2="0" y2="1"><stop offset="0" stop-color="#5a5b5e"/><stop offset="1" stop-color="#8e8f92"/></linearGradient></defs><rect width="77" height="77" rx="17.5" fill="url(#sp1)"/><circle cx="38.5" cy="38.5" r="31.5" fill="#48494b"/><rect x="37.1" y="7" width="2.8" height="5" fill="#3a3a3c" transform="rotate(0.0 38.5 38.5)"/><rect x="37.1" y="7" width="2.8" height="5" fill="#3a3a3c" transform="rotate(7.5 38.5 38.5)"/><rect x="37.1" y="7" width="2.8" height="5" fill="#3a3a3c" transform="rotate(15.0 38.5 38.5)"/><rect x="37.1" y="7" width="2.8" height="5" fill="#3a3a3c" transform="rotate(22.5 38.5 38.5)"/><rect x="37.1" y="7" width="2.8" height="5" fill="#3a3a3c" transform="rotate(30.0 38.5 38.5)"/><rect x="37.1" y="7" width="2.8" height="5" fill="#3a3a3c" transform="rotate(37.5 38.5 38.5)"/><rect x="37.1" y="7" width="2.8" height="5" fill="#3a3a3c" transform="rotate(45.0 38.5 38.5)"/><rect x="37.1" y="7" width="2.8" height="5" fill="#3a3a3c" transform="rotate(52.5 38.5 38.5)"/><rect x="37.1" y="7" width="2.8" height="5" fill="#3a3a3c" transform="rotate(60.0 38.5 38.5)"/><rect x="37.1" y="7" width="2.8" height="5" fill="#3a3a3c" transform="rotate(67.5 38.5 38.5)"/><rect x="37.1" y="7" width="2.8" height="5" fill="#3a3a3c" transform="rotate(75.0 38.5 38.5)"/><rect x="37.1" y="7" width="2.8" height="5" fill="#3a3a3c" transform="rotate(82.5 38.5 38.5)"/><rect x="37.1" y="7" width="2.8" height="5" fill="#3a3a3c" transform="rotate(90.0 38.5 38.5)"/><rect x="37.1" y="7" width="2.8" height="5" fill="#3a3a3c" transform="rotate(97.5 38.5 38.5)"/><rect x="37.1" y="7" width="2.8" height="5" fill="#3a3a3c" transform="rotate(105.0 38.5 38.5)"/><rect x="37.1" y="7" width="2.8" height="5" fill="#3a3a3c" transform="rotate(112.5 38.5 38.5)"/><rect x="37.1" y="7" width="2.8" height="5" fill="#3a3a3c" transform="rotate(120.0 38.5 38.5)"/><rect x="37.1" y="7" width="2.8" height="5" fill="#3a3a3c" transform="rotate(127.5 38.5 38.5)"/><rect x="37.1" y="7" width="2.8" height="5" fill="#3a3a3c" transform="rotate(135.0 38.5 38.5)"/><rect x="37.1" y="7" width="2.8" height="5" fill="#3a3a3c" transform="rotate(142.5 38.5 38.5)"/><rect x="37.1" y="7" width="2.8" height="5" fill="#3a3a3c" transform="rotate(150.0 38.5 38.5)"/><rect x="37.1" y="7" width="2.8" height="5" fill="#3a3a3c" transform="rotate(157.5 38.5 38.5)"/><rect x="37.1" y="7" width="2.8" height="5" fill="#3a3a3c" transform="rotate(165.0 38.5 38.5)"/><rect x="37.1" y="7" width="2.8" height="5" fill="#3a3a3c" transform="rotate(172.5 38.5 38.5)"/><rect x="37.1" y="7" width="2.8" height="5" fill="#3a3a3c" transform="rotate(180.0 38.5 38.5)"/><rect x="37.1" y="7" width="2.8" height="5" fill="#3a3a3c" transform="rotate(187.5 38.5 38.5)"/><rect x="37.1" y="7" width="2.8" height="5" fill="#3a3a3c" transform="rotate(195.0 38.5 38.5)"/><rect x="37.1" y="7" width="2.8" height="5" fill="#3a3a3c" transform="rotate(202.5 38.5 38.5)"/><rect x="37.1" y="7" width="2.8" height="5" fill="#3a3a3c" transform="rotate(210.0 38.5 38.5)"/><rect x="37.1" y="7" width="2.8" height="5" fill="#3a3a3c" transform="rotate(217.5 38.5 38.5)"/><rect x="37.1" y="7" width="2.8" height="5" fill="#3a3a3c" transform="rotate(225.0 38.5 38.5)"/><rect x="37.1" y="7" width="2.8" height="5" fill="#3a3a3c" transform="rotate(232.5 38.5 38.5)"/><rect x="37.1" y="7" width="2.8" height="5" fill="#3a3a3c" transform="rotate(240.0 38.5 38.5)"/><rect x="37.1" y="7" width="2.8" height="5" fill="#3a3a3c" transform="rotate(247.5 38.5 38.5)"/><rect x="37.1" y="7" width="2.8" height="5" fill="#3a3a3c" transform="rotate(255.0 38.5 38.5)"/><rect x="37.1" y="7" width="2.8" height="5" fill="#3a3a3c" transform="rotate(262.5 38.5 38.5)"/><rect x="37.1" y="7" width="2.8" height="5" fill="#3a3a3c" transform="rotate(270.0 38.5 38.5)"/><rect x="37.1" y="7" width="2.8" height="5" fill="#3a3a3c" transform="rotate(277.5 38.5 38.5)"/><rect x="37.1" y="7" width="2.8" height="5" fill="#3a3a3c" transform="rotate(285.0 38.5 38.5)"/><rect x="37.1" y="7" width="2.8" height="5" fill="#3a3a3c" transform="rotate(292.5 38.5 38.5)"/><rect x="37.1" y="7" width="2.8" height="5" fill="#3a3a3c" transform="rotate(300.0 38.5 38.5)"/><rect x="37.1" y="7" width="2.8" height="5" fill="#3a3a3c" transform="rotate(307.5 38.5 38.5)"/><rect x="37.1" y="7" width="2.8" height="5" fill="#3a3a3c" transform="rotate(315.0 38.5 38.5)"/><rect x="37.1" y="7" width="2.8" height="5" fill="#3a3a3c" transform="rotate(322.5 38.5 38.5)"/><rect x="37.1" y="7" width="2.8" height="5" fill="#3a3a3c" transform="rotate(330.0 38.5 38.5)"/><rect x="37.1" y="7" width="2.8" height="5" fill="#3a3a3c" transform="rotate(337.5 38.5 38.5)"/><rect x="37.1" y="7" width="2.8" height="5" fill="#3a3a3c" transform="rotate(345.0 38.5 38.5)"/><rect x="37.1" y="7" width="2.8" height="5" fill="#3a3a3c" transform="rotate(352.5 38.5 38.5)"/><circle cx="38.5" cy="38.5" r="27" fill="url(#sp2)"/><circle cx="38.5" cy="38.5" r="21" fill="#6a6b6e" stroke="#3a3a3c" stroke-width="4"/><g stroke="#3a3a3c" stroke-width="4"><path d="M38.5 38.500V17.500M38.5 38.5 56.7 49M38.5 38.5 20.3 49"/></g><circle cx="38.5" cy="38.5" r="3.4" fill="#c9c9cb"/></svg>
<div style="left:1774.5px;top:1485px;width:1.5px;height:89.5px;background:rgba(255,255,255,.32);"></div>
<svg style="left:1812px;top:1486.3px" width="77" height="77" viewBox="0 0 77 77" preserveAspectRatio="none"><rect width="77" height="77" rx="17.5" fill="#0e8ee9"/><circle cx="38.5" cy="38.5" r="32" fill="#fff"/><path d="M10.5 38.5 29 28v6.800h19V28l18.5 10.500L48 49v-6.800H29V49z" fill="#0e8ee9"/></svg>
<div style="left:1847.8px;top:1581.1px;width:5.4px;height:5.4px;border-radius:50%;background:#e6cdb8;"></div>
<svg style="left:1913px;top:1483px" width="82" height="82" viewBox="0 0 82 82" preserveAspectRatio="none"><defs><linearGradient id="sk1" x1="0" y1="0" x2="1" y2="1"><stop offset="0" stop-color="#18b7f0"/><stop offset="1" stop-color="#0a7fd3"/></linearGradient></defs><circle cx="28" cy="27" r="24" fill="url(#sk1)"/><circle cx="52" cy="52" r="24" fill="url(#sk1)"/><circle cx="40" cy="39.5" r="32" fill="url(#sk1)"/></svg>
<span class="t" style="left:1936px;top:1494.8px;font-size:62px;color:#fff;font-weight:700;">S</span>
<div style="left:1969.4px;top:1477.8px;width:35.4px;height:35.4px;border-radius:50%;background:#f23b3e;box-shadow:0 1px 2px rgba(0,0,0,.3);"></div>
<span class="t" style="left:1981.5px;top:1486.55px;font-size:20.5px;color:#fff;">4</span>
<div style="left:1950.8px;top:1581.1px;width:5.4px;height:5.4px;border-radius:50%;background:#e6cdb8;"></div>
<svg style="left:2015.3px;top:1483px" width="84" height="84" viewBox="0 0 84 84" preserveAspectRatio="none"><defs><linearGradient id="zm1" x1="0" y1="0" x2="0" y2="1"><stop offset="0" stop-color="#4a8cf7"/><stop offset="1" stop-color="#2d6ff0"/></linearGradient></defs><rect width="84" height="84" rx="27" fill="url(#zm1)"/><rect x="16.5" y="29" width="36" height="27" rx="6" fill="#fff"/><path d="M55.5 38.5 67.5 29.500v26l-12-9z" fill="#fff"/></svg>
<div style="left:2053.8px;top:1581.1px;width:5.4px;height:5.4px;border-radius:50%;background:#e6cdb8;"></div>
<svg style="left:2123.6px;top:1486.3px" width="77" height="77" viewBox="0 0 77 77" preserveAspectRatio="none"><rect width="77" height="77" rx="17.5" fill="#d8472a"/><circle cx="38.5" cy="38.5" r="29.5" fill="#f4f4f4"/><path d="M51.300 22.300 38.100 32.900 50.800 40M25.700 54.700 38.900 44.100 26.200 37" stroke="#d8472a" stroke-width="5.400" fill="none" stroke-linejoin="miter"/></svg>
<div style="left:2158.4px;top:1581.1px;width:5.4px;height:5.4px;border-radius:50%;background:#e6cdb8;"></div>
<svg style="left:2227.2px;top:1486.9px" width="76" height="76.6" viewBox="0 0 76 76.600" preserveAspectRatio="none"><rect width="76" height="76.600" rx="5" fill="#fb3e3a"/><path d="M13.500 38.900 30.600 22.400 47.400 38.900 30.600 55.700z" fill="#fff"/><path d="M41.900 25.700 45.800 22.400 61.700 38.900 45.800 55.400 41.900 52.100 55.100 38.900z" fill="#fff" stroke="#fb3e3a" stroke-width="1.200"/></svg>
<div style="left:2261.4px;top:1581.1px;width:5.4px;height:5.4px;border-radius:50%;background:#e6cdb8;"></div>
<div style="left:2339.5px;top:1485px;width:1.5px;height:89.5px;background:rgba(255,255,255,.3);"></div>
<svg style="left:2375px;top:1479px" width="80" height="88.5" viewBox="0 0 78 90" preserveAspectRatio="none"><defs><linearGradient id="tr1" x1="0" y1="0" x2="1" y2="0"><stop offset="0" stop-color="#6f7172"/><stop offset=".35" stop-color="#9a9c9d"/><stop offset=".7" stop-color="#7a7c7d"/><stop offset="1" stop-color="#5d5f60"/></linearGradient></defs><path d="M5 12h66l-7.5 70c-.5 3-3 4.5-6 4.500H18.500c-3 0-5.5-1.5-6-4.500z" fill="url(#tr1)" opacity=".93"/><ellipse cx="38" cy="12.5" rx="33" ry="6.5" fill="#56585a"/><path d="M12 10 17 1l9 5 6-6 8 7 7-6 6 6 8-4 3 9c-10 5-46 5-52-2z" fill="#f0f0f0"/><path d="M28 6l6 5-5 2zM44 5l5 5 5-3z" fill="#3f7ad9"/><path d="M36 9l4-3 3 5z" fill="#d9483f"/><path d="M22 8l4 2-3 3z" fill="#4fb04a"/></svg>
</div></body></html>
